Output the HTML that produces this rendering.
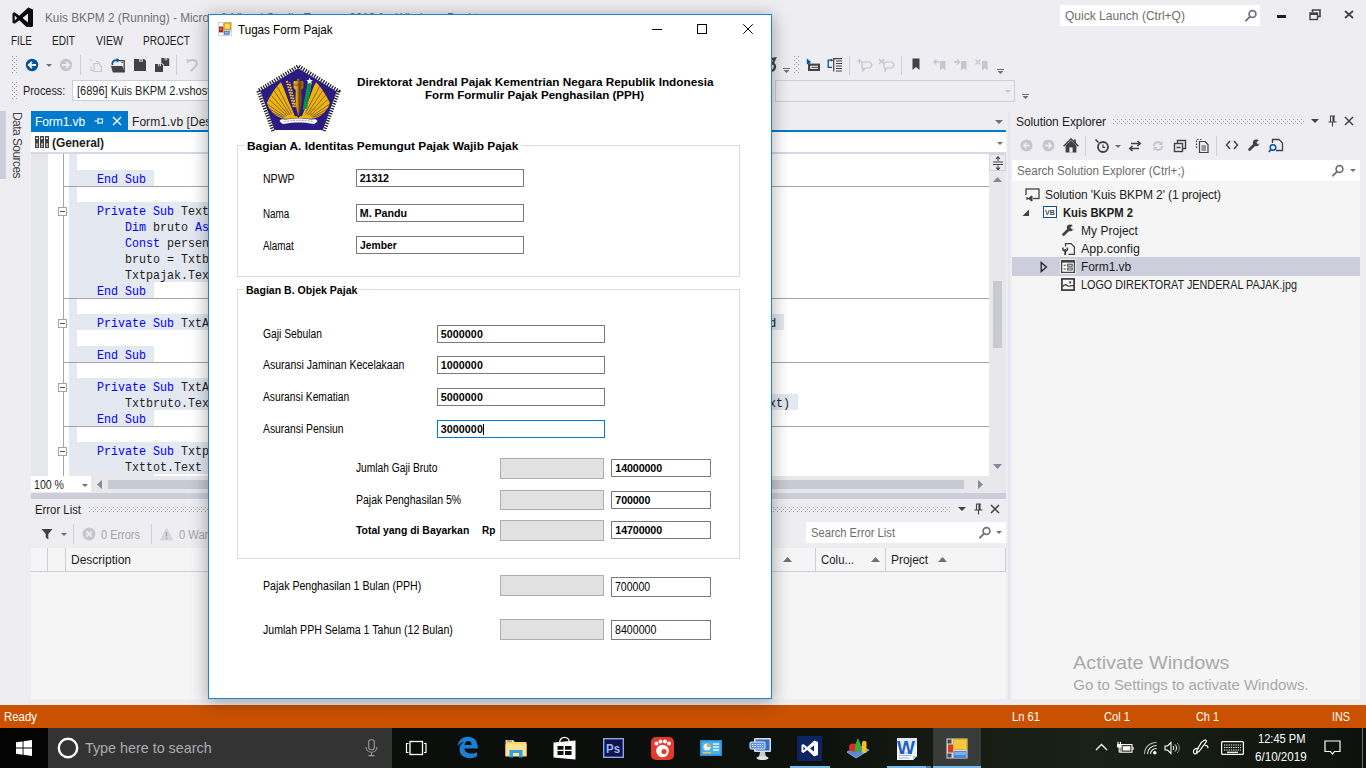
<!DOCTYPE html>
<html lang="id"><head><meta charset="utf-8"><title>Kuis BKPM 2 (Running) - Microsoft Visual Studio</title>
<style>
html,body{margin:0;padding:0;}
body{width:1366px;height:768px;overflow:hidden;position:relative;background:#eeeef2;font-family:"Liberation Sans",sans-serif;}
div,span,svg{position:absolute;box-sizing:border-box;}
.t{white-space:pre;}
</style></head>
<body>
<svg style="left:12px;top:7px;" width="21" height="20" viewBox="0 0 21 20"><path d="M16.2 0.5 L21.5 2.8 V19.2 L16.2 21.5 L7.2 13.2 L2.6 16.8 L0.5 15.7 V6.3 L2.6 5.2 L7.2 8.8 Z M16 6.6 L10.6 11 L16 15.4 Z M2.7 8.6 V13.4 L5.2 11 Z" fill="#0a0a0a" fill-rule="evenodd"/></svg>
<span class="t" style="left:44.5px;top:11.47px;font:12.5px/15px 'Liberation Sans', sans-serif;color:#717171;transform:scaleX(0.9443);transform-origin:0 50%;">Kuis BKPM 2 (Running) - Microsoft Visual Studio Express 2013 for Windows Desktop</span>
<div style="left:1060px;top:5px;width:200px;height:21px;background:#fff;"></div>
<span class="t" style="left:1065px;top:9.14px;font:12px/14px 'Liberation Sans', sans-serif;color:#6d6d6d;letter-spacing:0.013px;">Quick Launch (Ctrl+Q)</span>
<svg style="left:1243px;top:8px;" width="16" height="16" viewBox="0 0 16 16"><circle cx="9.5" cy="6" r="3.4" fill="none" stroke="#717171" stroke-width="1.7"/><path d="M7 8.6 L3 12.6" stroke="#717171" stroke-width="2" stroke-linecap="round"/></svg>
<div style="left:1277px;top:15px;width:9px;height:3px;background:#1e1e1e;"></div>
<svg style="left:1309px;top:9px;" width="12" height="12" viewBox="0 0 12 12"><path d="M3.5 3 V1 H11 V7.5 H9" fill="none" stroke="#424242" stroke-width="1.6"/><rect x="1" y="4" width="7.5" height="6.5" fill="none" stroke="#424242" stroke-width="1.4"/><rect x="1" y="4" width="7.5" height="2" fill="#424242"/></svg>
<svg style="left:1344px;top:10px;" width="10" height="9" viewBox="0 0 10 9"><path d="M1 1 L9 8 M9 1 L1 8" stroke="#424242" stroke-width="1.7"/></svg>
<span class="t" style="left:11px;top:34.14px;font:12px/14px 'Liberation Sans', sans-serif;color:#1e1e1e;transform:scaleX(0.8286);transform-origin:0 50%;">FILE</span>
<span class="t" style="left:52px;top:34.14px;font:12px/14px 'Liberation Sans', sans-serif;color:#1e1e1e;transform:scaleX(0.8411);transform-origin:0 50%;">EDIT</span>
<span class="t" style="left:96px;top:34.14px;font:12px/14px 'Liberation Sans', sans-serif;color:#1e1e1e;transform:scaleX(0.8803);transform-origin:0 50%;">VIEW</span>
<span class="t" style="left:143px;top:34.14px;font:12px/14px 'Liberation Sans', sans-serif;color:#1e1e1e;transform:scaleX(0.8391);transform-origin:0 50%;">PROJECT</span>
<svg style="left:12px;top:56px;" width="5" height="18" viewBox="0 0 5 18"><g fill="#9d9ea8"><rect x="0" y="0" width="1" height="1"/><rect x="4" y="0" width="1" height="1"/><rect x="2" y="2" width="1" height="1"/><rect x="0" y="4" width="1" height="1"/><rect x="4" y="4" width="1" height="1"/><rect x="2" y="6" width="1" height="1"/><rect x="0" y="8" width="1" height="1"/><rect x="4" y="8" width="1" height="1"/><rect x="2" y="10" width="1" height="1"/><rect x="0" y="12" width="1" height="1"/><rect x="4" y="12" width="1" height="1"/><rect x="2" y="14" width="1" height="1"/><rect x="0" y="16" width="1" height="1"/><rect x="4" y="16" width="1" height="1"/><rect x="2" y="18" width="1" height="1"/></g></svg>
<svg style="left:12px;top:82px;" width="5" height="18" viewBox="0 0 5 18"><g fill="#9d9ea8"><rect x="0" y="0" width="1" height="1"/><rect x="4" y="0" width="1" height="1"/><rect x="2" y="2" width="1" height="1"/><rect x="0" y="4" width="1" height="1"/><rect x="4" y="4" width="1" height="1"/><rect x="2" y="6" width="1" height="1"/><rect x="0" y="8" width="1" height="1"/><rect x="4" y="8" width="1" height="1"/><rect x="2" y="10" width="1" height="1"/><rect x="0" y="12" width="1" height="1"/><rect x="4" y="12" width="1" height="1"/><rect x="2" y="14" width="1" height="1"/><rect x="0" y="16" width="1" height="1"/><rect x="4" y="16" width="1" height="1"/><rect x="2" y="18" width="1" height="1"/></g></svg>
<svg style="left:24px;top:57px;" width="16" height="16" viewBox="0 0 16 16"><circle cx="8" cy="8" r="6.2" fill="#00539c"/><path d="M12 8 H5.2 M8 4.8 L4.8 8 L8 11.2" fill="none" stroke="#fff" stroke-width="1.8"/></svg>
<svg style="left:46px;top:64px;" width="6" height="3" viewBox="0 0 6 3"><path d="M0 0 H6 L3 3 Z" fill="#717171"/></svg>
<svg style="left:58px;top:57px;" width="16" height="16" viewBox="0 0 16 16"><circle cx="8" cy="8" r="6.2" fill="#c6c7cd"/><path d="M4 8 H10.8 M8 4.8 L11.2 8 L8 11.2" fill="none" stroke="#eeeef2" stroke-width="1.8"/></svg>
<div style="left:80px;top:55px;width:1px;height:20px;background:#cccedb;"></div>
<svg style="left:89px;top:58px;" width="14" height="14" viewBox="0 0 14 14"><path d="M5 5.5 H9.5 L12.5 8.5 V13.5 H5 Z" fill="none" stroke="#c6c7cd" stroke-width="1.2"/><path d="M7 3.5 H9 L11 5.5 M2 9 V12.5 H3.5" fill="none" stroke="#c6c7cd" stroke-width="1.1"/><path d="M0.5 0.5 l2.5 2.5 m0 -2.5 l-2.5 2.5" stroke="#d4d5da" stroke-width="0.9"/></svg>
<svg style="left:111px;top:58px;" width="15" height="15" viewBox="0 0 15 15"><path d="M8 2.6 H13.2 V14" fill="none" stroke="#424242" stroke-width="1.3"/><path d="M10.3 4.4 H12" stroke="#424242" stroke-width="1"/><path d="M0 8 H11.3 L13.9 14.6 H1.8 Z" fill="#424242"/><path d="M1.6 7 C0.3 3.2 4 1.6 6.4 2.3" fill="none" stroke="#00539c" stroke-width="1.7"/><path d="M5.6 0 L9 2.3 L5.6 4.7 Z" fill="#00539c"/></svg>
<svg style="left:134px;top:59px;" width="12" height="12" viewBox="0 0 12 12"><path d="M0 0 H10.2 L12 1.8 V12 H0 Z" fill="#424242"/><rect x="5.3" y="0" width="3.4" height="2.9" fill="#eeeef2"/><rect x="6.4" y="0.5" width="1.3" height="2" fill="#424242"/></svg>
<svg style="left:155px;top:58px;" width="15" height="14" viewBox="0 0 15 14"><path d="M6.3 0 H13.2 L14.2 1 V8 H6.3 Z" fill="#424242"/><rect x="9.6" y="0" width="2.6" height="2.2" fill="#eeeef2"/><rect x="10.4" y="0.3" width="1" height="1.6" fill="#424242"/><path d="M-0.6 5.4 H7.6 L8.8 6.6 V14.6 H-0.6 Z" fill="#eeeef2"/><path d="M0 6 H7 L8 7 V14 H0 Z" fill="#424242"/><rect x="3.2" y="6" width="2.6" height="2.2" fill="#eeeef2"/><rect x="4" y="6.3" width="1" height="1.6" fill="#424242"/></svg>
<div style="left:176px;top:55px;width:1px;height:20px;background:#cccedb;"></div>
<svg style="left:186px;top:58px;" width="13" height="14" viewBox="0 0 13 14"><path d="M2 3.5 C5 1.2 10.5 1.6 10.8 5.2 C11 8 7.5 10.5 4.8 13.2" fill="none" stroke="#c6c7cd" stroke-width="2.1"/><path d="M0.3 0.8 L5 2 L1.2 5.6 Z" fill="#c6c7cd"/></svg>
<span class="t" style="left:23.2px;top:84.14px;font:12px/14px 'Liberation Sans', sans-serif;color:#1e1e1e;transform:scaleX(0.9060);transform-origin:0 50%;">Process:</span>
<div style="left:72px;top:80px;width:400px;height:21px;background:#fff;border:1px solid #cccedb;"></div>
<span class="t" style="left:76.8px;top:84.14px;font:12px/14px 'Liberation Sans', sans-serif;color:#1e1e1e;transform:scaleX(0.9164);transform-origin:0 50%;">[6896] Kuis BKPM 2.vshost.exe</span>
<svg style="left:768px;top:57px;" width="10" height="16" viewBox="0 0 10 16"><path d="M3.5 2 L7 1.4 L4.6 6.6 C8 7 8 13 3 14" fill="none" stroke="#424242" stroke-width="2.2"/></svg>
<svg style="left:783px;top:68px;" width="7" height="6" viewBox="0 0 7 6"><path d="M0 0 H7 V1 H0 Z M0.5 2 H6.5 L3.5 5 Z" fill="#717171"/></svg>
<svg style="left:794px;top:56px;" width="5" height="18" viewBox="0 0 5 18"><g fill="#9d9ea8"><rect x="0" y="0" width="1" height="1"/><rect x="4" y="0" width="1" height="1"/><rect x="2" y="2" width="1" height="1"/><rect x="0" y="4" width="1" height="1"/><rect x="4" y="4" width="1" height="1"/><rect x="2" y="6" width="1" height="1"/><rect x="0" y="8" width="1" height="1"/><rect x="4" y="8" width="1" height="1"/><rect x="2" y="10" width="1" height="1"/><rect x="0" y="12" width="1" height="1"/><rect x="4" y="12" width="1" height="1"/><rect x="2" y="14" width="1" height="1"/><rect x="0" y="16" width="1" height="1"/><rect x="4" y="16" width="1" height="1"/><rect x="2" y="18" width="1" height="1"/></g></svg>
<svg style="left:806px;top:58px;" width="15" height="14" viewBox="0 0 15 14"><rect x="2" y="5.6" width="12" height="7.4" fill="#424242"/><rect x="4.2" y="7.7" width="7.8" height="3.2" fill="#eeeef2"/><rect x="5.4" y="8.8" width="6.6" height="1" fill="#424242"/><path d="M0.8 0.6 L5.4 4.2 L3.4 4.8 L4.6 7.4 L3.4 7.9 L2.3 5.4 L0.8 6.6 Z" fill="#00539c"/></svg>
<svg style="left:827px;top:58px;" width="16" height="14" viewBox="0 0 16 14"><path d="M5.4 2.2 H1.2 V9.4 H5" fill="none" stroke="#00539c" stroke-width="1.3"/><path d="M3.8 0.6 L6.2 2.2 L3.8 3.8 Z" fill="#00539c"/><path d="M6.7 0 V13.6" stroke="#424242" stroke-width="1.2"/><path d="M6.7 0.6 H15 M9 3 H15 M9 5.5 H15 M9 8 H15 M9 10.5 H15 M9 13 H15" stroke="#424242" stroke-width="1.1"/></svg>
<div style="left:849px;top:56px;width:1px;height:19px;background:#cccedb;"></div>
<svg style="left:856px;top:58px;" width="18" height="14" viewBox="0 0 18 14"><path d="M6 4 H14 L16 7 L14 10 H9 L7 13 V10 H6 Z" fill="none" stroke="#c2c3c9" stroke-width="1.2"/><path d="M1 3 H6 M3.5 0.5 V5.5" stroke="#c2c3c9" stroke-width="1.2"/></svg>
<svg style="left:878px;top:58px;" width="18" height="14" viewBox="0 0 18 14"><path d="M6 4 H14 L16 7 L14 10 H9 L7 13 V10 H6 Z" fill="none" stroke="#c2c3c9" stroke-width="1.2"/><path d="M1 1 L6 6 M6 1 L1 6" stroke="#c2c3c9" stroke-width="1.2"/></svg>
<div style="left:901px;top:56px;width:1px;height:19px;background:#cccedb;"></div>
<svg style="left:911px;top:58px;" width="10" height="13" viewBox="0 0 10 13"><path d="M1.5 0.5 H8.5 V12 L5 9 L1.5 12 Z" fill="#424242"/></svg>
<svg style="left:932px;top:58px;" width="16" height="13" viewBox="0 0 16 13"><path d="M8 3 H13.5 V12.5 L10.75 10 L8 12.5 Z" fill="#c6c7cd"/><path d="M2 4 H7.5 M4.5 1.5 L2 4 L4.5 6.5" fill="none" stroke="#c6c7cd" stroke-width="1.4"/></svg>
<svg style="left:953px;top:58px;" width="16" height="13" viewBox="0 0 16 13"><path d="M8 3 H13.5 V12.5 L10.75 10 L8 12.5 Z" fill="#c6c7cd"/><path d="M1 4 H6.5 M4 1.5 L6.5 4 L4 6.5" fill="none" stroke="#c6c7cd" stroke-width="1.4"/></svg>
<svg style="left:974px;top:58px;" width="16" height="13" viewBox="0 0 16 13"><path d="M8 3 H13.5 V12.5 L10.75 10 L8 12.5 Z" fill="#c6c7cd"/><path d="M1.5 1.5 L6.5 6.5 M6.5 1.5 L1.5 6.5" fill="none" stroke="#c6c7cd" stroke-width="1.4"/></svg>
<svg style="left:997px;top:69px;" width="7" height="5" viewBox="0 0 7 5"><path d="M0 0 H7 V1 H0 Z M0.5 2 H6.5 L3.5 5 Z" fill="#717171"/></svg>
<div style="left:775px;top:80px;width:240px;height:22px;background:#eeeef2;border:1px solid #cccedb;"></div>
<svg style="left:1005px;top:90px;" width="6" height="3" viewBox="0 0 6 3"><path d="M0 0 H6 L3 3 Z" fill="#c2c3c9"/></svg>
<svg style="left:1022px;top:94px;" width="7" height="5" viewBox="0 0 7 5"><path d="M0 0 H7 V1 H0 Z M0.5 2 H6.5 L3.5 5 Z" fill="#717171"/></svg>
<div style="left:0px;top:111px;width:6px;height:68px;background:#cccedb;"></div>
<div style="left:1008px;top:112px;width:2px;height:588px;background:#e5e6ef;"></div>
<span class="t" style="left:0px;top:-10.86px;font:12px/14px 'Liberation Sans', sans-serif;color:#444;letter-spacing:-0.559px;left:0;top:0;transform-origin:0 0;transform:translate(24px,112px) rotate(90deg);">Data Sources</span>
<div style="left:31px;top:111px;width:97px;height:21px;background:#007acc;"></div>
<span class="t" style="left:35px;top:115.14px;font:12px/14px 'Liberation Sans', sans-serif;color:#fff;letter-spacing:-0.086px;">Form1.vb</span>
<svg style="left:94px;top:116px;" width="10" height="10" viewBox="0 0 10 10"><path d="M0.5 5 H4 M4 2 V8 M4 3 H9 M4 7 H9 M8.5 3 V7" fill="none" stroke="#fff" stroke-width="1.1"/></svg>
<svg style="left:112px;top:116px;" width="10" height="10" viewBox="0 0 10 10"><path d="M1 1 L9 9 M9 1 L1 9" stroke="#fff" stroke-width="1.3"/></svg>
<span class="t" style="left:132px;top:115.14px;font:12px/14px 'Liberation Sans', sans-serif;color:#1e1e1e;letter-spacing:0.056px;">Form1.vb [Design]</span>
<div style="left:31px;top:130px;width:975px;height:2px;background:#007acc;"></div>
<svg style="left:995px;top:120px;" width="8" height="4" viewBox="0 0 8 4"><path d="M0 0 H8 L4 4 Z" fill="#717171"/></svg>
<div style="left:31px;top:132px;width:975px;height:22px;background:#fff;border-bottom:2px solid #d6d8e6;"></div>
<svg style="left:35px;top:136px;" width="14" height="12" viewBox="0 0 14 12"><g fill="#424242"><rect x="0" y="0" width="4" height="12"/><rect x="5" y="0" width="4" height="12"/><rect x="10" y="0" width="4" height="12"/></g><g fill="#fff"><rect x="1" y="1.6" width="2" height="1.4"/><rect x="6" y="1.6" width="2" height="1.4"/><rect x="11" y="1.6" width="2" height="1.4"/><rect x="1" y="7.6" width="2" height="1"/><rect x="6" y="7.6" width="2" height="1"/><rect x="11" y="7.6" width="2" height="1"/><rect x="1" y="9.6" width="2" height="1"/><rect x="6" y="9.6" width="2" height="1"/><rect x="11" y="9.6" width="2" height="1"/></g></svg>
<span class="t" style="left:52px;top:136.14px;font:bold 12px/14px 'Liberation Sans', sans-serif;color:#1e1e1e;letter-spacing:-0.076px;">(General)</span>
<svg style="left:997px;top:142px;" width="6" height="3" viewBox="0 0 6 3"><path d="M0 0 H6 L3 3 Z" fill="#717171"/></svg>
<div style="left:31px;top:154px;width:959px;height:322px;background:#fff;"></div>
<div style="left:31px;top:154px;width:17px;height:322px;background:#e6e7e8;"></div>
<div style="left:63px;top:154px;width:1px;height:322px;background:#a5a5a5;"></div>
<div style="left:69px;top:154px;width:8px;height:16px;background:#e4e8f1;"></div>
<div style="left:69px;top:170px;width:85px;height:16px;background:#e4e8f1;"></div>
<span class="t" style="left:97px;top:173.00px;font:12.2px/15px 'Liberation Mono', monospace;color:#0000ff;transform:scaleX(0.9570);transform-origin:0 50%;">End Sub</span>
<div style="left:69px;top:186px;width:8px;height:16px;background:#e4e8f1;"></div>
<div style="left:69px;top:202px;width:631px;height:16px;background:#e4e8f1;"></div>
<span class="t" style="left:97px;top:205.00px;font:12.2px/15px 'Liberation Mono', monospace;color:#0000ff;transform:scaleX(0.9571);transform-origin:0 50%;">Private Sub</span>
<span class="t" style="left:181px;top:205.00px;font:12.2px/15px 'Liberation Mono', monospace;color:#1e1e1e;transform:scaleX(0.9570);transform-origin:0 50%;">TextBox1_TextChanged(sender </span>
<div style="left:69px;top:218px;width:331px;height:16px;background:#e4e8f1;"></div>
<span class="t" style="left:125px;top:221.00px;font:12.2px/15px 'Liberation Mono', monospace;color:#0000ff;transform:scaleX(0.9566);transform-origin:0 50%;">Dim</span>
<span class="t" style="left:153px;top:221.00px;font:12.2px/15px 'Liberation Mono', monospace;color:#1e1e1e;transform:scaleX(0.9569);transform-origin:0 50%;">bruto </span>
<span class="t" style="left:195px;top:221.00px;font:12.2px/15px 'Liberation Mono', monospace;color:#0000ff;transform:scaleX(0.9562);transform-origin:0 50%;">As</span>
<div style="left:69px;top:234px;width:331px;height:16px;background:#e4e8f1;"></div>
<span class="t" style="left:125px;top:237.00px;font:12.2px/15px 'Liberation Mono', monospace;color:#0000ff;transform:scaleX(0.9569);transform-origin:0 50%;">Const</span>
<span class="t" style="left:167px;top:237.00px;font:12.2px/15px 'Liberation Mono', monospace;color:#1e1e1e;transform:scaleX(0.9569);transform-origin:0 50%;">persen</span>
<div style="left:69px;top:250px;width:331px;height:16px;background:#e4e8f1;"></div>
<span class="t" style="left:125px;top:253.00px;font:12.2px/15px 'Liberation Mono', monospace;color:#1e1e1e;transform:scaleX(0.9571);transform-origin:0 50%;">bruto = Txtb</span>
<div style="left:69px;top:266px;width:331px;height:16px;background:#e4e8f1;"></div>
<span class="t" style="left:125px;top:269.00px;font:12.2px/15px 'Liberation Mono', monospace;color:#1e1e1e;transform:scaleX(0.9571);transform-origin:0 50%;">Txtpajak.Tex</span>
<div style="left:69px;top:282px;width:85px;height:16px;background:#e4e8f1;"></div>
<span class="t" style="left:97px;top:285.00px;font:12.2px/15px 'Liberation Mono', monospace;color:#0000ff;transform:scaleX(0.9570);transform-origin:0 50%;">End Sub</span>
<div style="left:69px;top:298px;width:8px;height:16px;background:#e4e8f1;"></div>
<div style="left:69px;top:314px;width:715px;height:16px;background:#e4e8f1;"></div>
<span class="t" style="left:97px;top:317.00px;font:12.2px/15px 'Liberation Mono', monospace;color:#0000ff;transform:scaleX(0.9571);transform-origin:0 50%;">Private Sub</span>
<span class="t" style="left:181px;top:317.00px;font:12.2px/15px 'Liberation Mono', monospace;color:#1e1e1e;transform:scaleX(0.9568);transform-origin:0 50%;">TxtA</span>
<div style="left:69px;top:330px;width:8px;height:16px;background:#e4e8f1;"></div>
<div style="left:69px;top:346px;width:85px;height:16px;background:#e4e8f1;"></div>
<span class="t" style="left:97px;top:349.00px;font:12.2px/15px 'Liberation Mono', monospace;color:#0000ff;transform:scaleX(0.9570);transform-origin:0 50%;">End Sub</span>
<div style="left:69px;top:362px;width:8px;height:16px;background:#e4e8f1;"></div>
<div style="left:69px;top:378px;width:631px;height:16px;background:#e4e8f1;"></div>
<span class="t" style="left:97px;top:381.00px;font:12.2px/15px 'Liberation Mono', monospace;color:#0000ff;transform:scaleX(0.9571);transform-origin:0 50%;">Private Sub</span>
<span class="t" style="left:181px;top:381.00px;font:12.2px/15px 'Liberation Mono', monospace;color:#1e1e1e;transform:scaleX(0.9568);transform-origin:0 50%;">TxtA</span>
<div style="left:69px;top:394px;width:729px;height:16px;background:#e4e8f1;"></div>
<span class="t" style="left:125px;top:397.00px;font:12.2px/15px 'Liberation Mono', monospace;color:#1e1e1e;transform:scaleX(0.9571);transform-origin:0 50%;">Txtbruto.Tex</span>
<div style="left:69px;top:410px;width:85px;height:16px;background:#e4e8f1;"></div>
<span class="t" style="left:97px;top:413.00px;font:12.2px/15px 'Liberation Mono', monospace;color:#0000ff;transform:scaleX(0.9570);transform-origin:0 50%;">End Sub</span>
<div style="left:69px;top:426px;width:8px;height:16px;background:#e4e8f1;"></div>
<div style="left:69px;top:442px;width:631px;height:16px;background:#e4e8f1;"></div>
<span class="t" style="left:97px;top:445.00px;font:12.2px/15px 'Liberation Mono', monospace;color:#0000ff;transform:scaleX(0.9571);transform-origin:0 50%;">Private Sub</span>
<span class="t" style="left:181px;top:445.00px;font:12.2px/15px 'Liberation Mono', monospace;color:#1e1e1e;transform:scaleX(0.9568);transform-origin:0 50%;">Txtp</span>
<div style="left:69px;top:458px;width:431px;height:16px;background:#e4e8f1;"></div>
<span class="t" style="left:125px;top:461.00px;font:12.2px/15px 'Liberation Mono', monospace;color:#1e1e1e;transform:scaleX(0.9571);transform-origin:0 50%;">Txttot.Text</span>
<div style="left:69px;top:474px;width:8px;height:2px;background:#e4e8f1;"></div>
<div style="left:69px;top:474px;width:85px;height:2px;background:#e4e8f1;"></div>
<div style="left:63px;top:186px;width:926px;height:1px;background:#a5a5a5;"></div>
<div style="left:63px;top:298px;width:926px;height:1px;background:#a5a5a5;"></div>
<div style="left:63px;top:362px;width:926px;height:1px;background:#a5a5a5;"></div>
<div style="left:63px;top:426px;width:926px;height:1px;background:#a5a5a5;"></div>
<span class="t" style="left:769px;top:317.00px;font:12.2px/15px 'Liberation Mono', monospace;color:#1e1e1e;">d</span>
<span class="t" style="left:769px;top:397.00px;font:12.2px/15px 'Liberation Mono', monospace;color:#1e1e1e;transform:scaleX(0.9566);transform-origin:0 50%;">xt)</span>
<div style="left:58px;top:207px;width:9px;height:9px;background:#fff;border:1px solid #a5a5a5;"><div style="left:1px;top:3px;width:5px;height:1px;background:#555"></div></div>
<div style="left:58px;top:319px;width:9px;height:9px;background:#fff;border:1px solid #a5a5a5;"><div style="left:1px;top:3px;width:5px;height:1px;background:#555"></div></div>
<div style="left:58px;top:383px;width:9px;height:9px;background:#fff;border:1px solid #a5a5a5;"><div style="left:1px;top:3px;width:5px;height:1px;background:#555"></div></div>
<div style="left:58px;top:447px;width:9px;height:9px;background:#fff;border:1px solid #a5a5a5;"><div style="left:1px;top:3px;width:5px;height:1px;background:#555"></div></div>
<div style="left:989px;top:154px;width:17px;height:322px;background:#e8e8ec;"></div>
<div style="left:989px;top:154px;width:17px;height:17px;background:#ececf0;border:1px solid #d2d3de;"></div>
<svg style="left:991px;top:156px;" width="13" height="14" viewBox="0 0 13 14"><path d="M2 6 H12 M2 8.5 H12 M7 1 V5 M7 9.5 V13.5 M5 3 L7 0.8 L9 3 M5 11.5 L7 13.7 L9 11.5" fill="none" stroke="#424242" stroke-width="1.1"/></svg>
<svg style="left:993px;top:177px;" width="9" height="5" viewBox="0 0 9 5"><path d="M0 5 H9 L4.5 0 Z" fill="#868999"/></svg>
<svg style="left:993px;top:464px;" width="9" height="5" viewBox="0 0 9 5"><path d="M0 0 H9 L4.5 5 Z" fill="#868999"/></svg>
<div style="left:993px;top:281px;width:9px;height:67px;background:#c8c9d1;"></div>
<div style="left:31px;top:476px;width:975px;height:17px;background:#e8e8ec;"></div>
<div style="left:31px;top:476px;width:60px;height:16px;background:#fff;"></div>
<span class="t" style="left:34px;top:478.14px;font:12px/14px 'Liberation Sans', sans-serif;color:#1e1e1e;transform:scaleX(0.8815);transform-origin:0 50%;">100 %</span>
<svg style="left:82px;top:484px;" width="6" height="3" viewBox="0 0 6 3"><path d="M0 0 H6 L3 3 Z" fill="#717171"/></svg>
<svg style="left:97px;top:480px;" width="5" height="9" viewBox="0 0 5 9"><path d="M5 0 V9 L0 4.5 Z" fill="#868999"/></svg>
<svg style="left:978px;top:480px;" width="5" height="9" viewBox="0 0 5 9"><path d="M0 0 V9 L5 4.5 Z" fill="#868999"/></svg>
<div style="left:108px;top:480px;width:856px;height:9px;background:#c8c9d1;"></div>
<div style="left:31px;top:493px;width:975px;height:6px;background:#cccedb;"></div>
<span class="t" style="left:35px;top:503.14px;font:12px/14px 'Liberation Sans', sans-serif;color:#1e1e1e;transform:scaleX(0.9448);transform-origin:0 50%;">Error List</span>
<svg style="left:89px;top:507px;" width="862" height="5" viewBox="0 0 862 5"><g fill="#999ba8"><rect x="0" y="0" width="1" height="1"/><rect x="2" y="2" width="1" height="1"/><rect x="0" y="4" width="1" height="1"/><rect x="4" y="0" width="1" height="1"/><rect x="6" y="2" width="1" height="1"/><rect x="4" y="4" width="1" height="1"/><rect x="8" y="0" width="1" height="1"/><rect x="10" y="2" width="1" height="1"/><rect x="8" y="4" width="1" height="1"/><rect x="12" y="0" width="1" height="1"/><rect x="14" y="2" width="1" height="1"/><rect x="12" y="4" width="1" height="1"/><rect x="16" y="0" width="1" height="1"/><rect x="18" y="2" width="1" height="1"/><rect x="16" y="4" width="1" height="1"/><rect x="20" y="0" width="1" height="1"/><rect x="22" y="2" width="1" height="1"/><rect x="20" y="4" width="1" height="1"/><rect x="24" y="0" width="1" height="1"/><rect x="26" y="2" width="1" height="1"/><rect x="24" y="4" width="1" height="1"/><rect x="28" y="0" width="1" height="1"/><rect x="30" y="2" width="1" height="1"/><rect x="28" y="4" width="1" height="1"/><rect x="32" y="0" width="1" height="1"/><rect x="34" y="2" width="1" height="1"/><rect x="32" y="4" width="1" height="1"/><rect x="36" y="0" width="1" height="1"/><rect x="38" y="2" width="1" height="1"/><rect x="36" y="4" width="1" height="1"/><rect x="40" y="0" width="1" height="1"/><rect x="42" y="2" width="1" height="1"/><rect x="40" y="4" width="1" height="1"/><rect x="44" y="0" width="1" height="1"/><rect x="46" y="2" width="1" height="1"/><rect x="44" y="4" width="1" height="1"/><rect x="48" y="0" width="1" height="1"/><rect x="50" y="2" width="1" height="1"/><rect x="48" y="4" width="1" height="1"/><rect x="52" y="0" width="1" height="1"/><rect x="54" y="2" width="1" height="1"/><rect x="52" y="4" width="1" height="1"/><rect x="56" y="0" width="1" height="1"/><rect x="58" y="2" width="1" height="1"/><rect x="56" y="4" width="1" height="1"/><rect x="60" y="0" width="1" height="1"/><rect x="62" y="2" width="1" height="1"/><rect x="60" y="4" width="1" height="1"/><rect x="64" y="0" width="1" height="1"/><rect x="66" y="2" width="1" height="1"/><rect x="64" y="4" width="1" height="1"/><rect x="68" y="0" width="1" height="1"/><rect x="70" y="2" width="1" height="1"/><rect x="68" y="4" width="1" height="1"/><rect x="72" y="0" width="1" height="1"/><rect x="74" y="2" width="1" height="1"/><rect x="72" y="4" width="1" height="1"/><rect x="76" y="0" width="1" height="1"/><rect x="78" y="2" width="1" height="1"/><rect x="76" y="4" width="1" height="1"/><rect x="80" y="0" width="1" height="1"/><rect x="82" y="2" width="1" height="1"/><rect x="80" y="4" width="1" height="1"/><rect x="84" y="0" width="1" height="1"/><rect x="86" y="2" width="1" height="1"/><rect x="84" y="4" width="1" height="1"/><rect x="88" y="0" width="1" height="1"/><rect x="90" y="2" width="1" height="1"/><rect x="88" y="4" width="1" height="1"/><rect x="92" y="0" width="1" height="1"/><rect x="94" y="2" width="1" height="1"/><rect x="92" y="4" width="1" height="1"/><rect x="96" y="0" width="1" height="1"/><rect x="98" y="2" width="1" height="1"/><rect x="96" y="4" width="1" height="1"/><rect x="100" y="0" width="1" height="1"/><rect x="102" y="2" width="1" height="1"/><rect x="100" y="4" width="1" height="1"/><rect x="104" y="0" width="1" height="1"/><rect x="106" y="2" width="1" height="1"/><rect x="104" y="4" width="1" height="1"/><rect x="108" y="0" width="1" height="1"/><rect x="110" y="2" width="1" height="1"/><rect x="108" y="4" width="1" height="1"/><rect x="112" y="0" width="1" height="1"/><rect x="114" y="2" width="1" height="1"/><rect x="112" y="4" width="1" height="1"/><rect x="116" y="0" width="1" height="1"/><rect x="118" y="2" width="1" height="1"/><rect x="116" y="4" width="1" height="1"/><rect x="120" y="0" width="1" height="1"/><rect x="122" y="2" width="1" height="1"/><rect x="120" y="4" width="1" height="1"/><rect x="124" y="0" width="1" height="1"/><rect x="126" y="2" width="1" height="1"/><rect x="124" y="4" width="1" height="1"/><rect x="128" y="0" width="1" height="1"/><rect x="130" y="2" width="1" height="1"/><rect x="128" y="4" width="1" height="1"/><rect x="132" y="0" width="1" height="1"/><rect x="134" y="2" width="1" height="1"/><rect x="132" y="4" width="1" height="1"/><rect x="136" y="0" width="1" height="1"/><rect x="138" y="2" width="1" height="1"/><rect x="136" y="4" width="1" height="1"/><rect x="140" y="0" width="1" height="1"/><rect x="142" y="2" width="1" height="1"/><rect x="140" y="4" width="1" height="1"/><rect x="144" y="0" width="1" height="1"/><rect x="146" y="2" width="1" height="1"/><rect x="144" y="4" width="1" height="1"/><rect x="148" y="0" width="1" height="1"/><rect x="150" y="2" width="1" height="1"/><rect x="148" y="4" width="1" height="1"/><rect x="152" y="0" width="1" height="1"/><rect x="154" y="2" width="1" height="1"/><rect x="152" y="4" width="1" height="1"/><rect x="156" y="0" width="1" height="1"/><rect x="158" y="2" width="1" height="1"/><rect x="156" y="4" width="1" height="1"/><rect x="160" y="0" width="1" height="1"/><rect x="162" y="2" width="1" height="1"/><rect x="160" y="4" width="1" height="1"/><rect x="164" y="0" width="1" height="1"/><rect x="166" y="2" width="1" height="1"/><rect x="164" y="4" width="1" height="1"/><rect x="168" y="0" width="1" height="1"/><rect x="170" y="2" width="1" height="1"/><rect x="168" y="4" width="1" height="1"/><rect x="172" y="0" width="1" height="1"/><rect x="174" y="2" width="1" height="1"/><rect x="172" y="4" width="1" height="1"/><rect x="176" y="0" width="1" height="1"/><rect x="178" y="2" width="1" height="1"/><rect x="176" y="4" width="1" height="1"/><rect x="180" y="0" width="1" height="1"/><rect x="182" y="2" width="1" height="1"/><rect x="180" y="4" width="1" height="1"/><rect x="184" y="0" width="1" height="1"/><rect x="186" y="2" width="1" height="1"/><rect x="184" y="4" width="1" height="1"/><rect x="188" y="0" width="1" height="1"/><rect x="190" y="2" width="1" height="1"/><rect x="188" y="4" width="1" height="1"/><rect x="192" y="0" width="1" height="1"/><rect x="194" y="2" width="1" height="1"/><rect x="192" y="4" width="1" height="1"/><rect x="196" y="0" width="1" height="1"/><rect x="198" y="2" width="1" height="1"/><rect x="196" y="4" width="1" height="1"/><rect x="200" y="0" width="1" height="1"/><rect x="202" y="2" width="1" height="1"/><rect x="200" y="4" width="1" height="1"/><rect x="204" y="0" width="1" height="1"/><rect x="206" y="2" width="1" height="1"/><rect x="204" y="4" width="1" height="1"/><rect x="208" y="0" width="1" height="1"/><rect x="210" y="2" width="1" height="1"/><rect x="208" y="4" width="1" height="1"/><rect x="212" y="0" width="1" height="1"/><rect x="214" y="2" width="1" height="1"/><rect x="212" y="4" width="1" height="1"/><rect x="216" y="0" width="1" height="1"/><rect x="218" y="2" width="1" height="1"/><rect x="216" y="4" width="1" height="1"/><rect x="220" y="0" width="1" height="1"/><rect x="222" y="2" width="1" height="1"/><rect x="220" y="4" width="1" height="1"/><rect x="224" y="0" width="1" height="1"/><rect x="226" y="2" width="1" height="1"/><rect x="224" y="4" width="1" height="1"/><rect x="228" y="0" width="1" height="1"/><rect x="230" y="2" width="1" height="1"/><rect x="228" y="4" width="1" height="1"/><rect x="232" y="0" width="1" height="1"/><rect x="234" y="2" width="1" height="1"/><rect x="232" y="4" width="1" height="1"/><rect x="236" y="0" width="1" height="1"/><rect x="238" y="2" width="1" height="1"/><rect x="236" y="4" width="1" height="1"/><rect x="240" y="0" width="1" height="1"/><rect x="242" y="2" width="1" height="1"/><rect x="240" y="4" width="1" height="1"/><rect x="244" y="0" width="1" height="1"/><rect x="246" y="2" width="1" height="1"/><rect x="244" y="4" width="1" height="1"/><rect x="248" y="0" width="1" height="1"/><rect x="250" y="2" width="1" height="1"/><rect x="248" y="4" width="1" height="1"/><rect x="252" y="0" width="1" height="1"/><rect x="254" y="2" width="1" height="1"/><rect x="252" y="4" width="1" height="1"/><rect x="256" y="0" width="1" height="1"/><rect x="258" y="2" width="1" height="1"/><rect x="256" y="4" width="1" height="1"/><rect x="260" y="0" width="1" height="1"/><rect x="262" y="2" width="1" height="1"/><rect x="260" y="4" width="1" height="1"/><rect x="264" y="0" width="1" height="1"/><rect x="266" y="2" width="1" height="1"/><rect x="264" y="4" width="1" height="1"/><rect x="268" y="0" width="1" height="1"/><rect x="270" y="2" width="1" height="1"/><rect x="268" y="4" width="1" height="1"/><rect x="272" y="0" width="1" height="1"/><rect x="274" y="2" width="1" height="1"/><rect x="272" y="4" width="1" height="1"/><rect x="276" y="0" width="1" height="1"/><rect x="278" y="2" width="1" height="1"/><rect x="276" y="4" width="1" height="1"/><rect x="280" y="0" width="1" height="1"/><rect x="282" y="2" width="1" height="1"/><rect x="280" y="4" width="1" height="1"/><rect x="284" y="0" width="1" height="1"/><rect x="286" y="2" width="1" height="1"/><rect x="284" y="4" width="1" height="1"/><rect x="288" y="0" width="1" height="1"/><rect x="290" y="2" width="1" height="1"/><rect x="288" y="4" width="1" height="1"/><rect x="292" y="0" width="1" height="1"/><rect x="294" y="2" width="1" height="1"/><rect x="292" y="4" width="1" height="1"/><rect x="296" y="0" width="1" height="1"/><rect x="298" y="2" width="1" height="1"/><rect x="296" y="4" width="1" height="1"/><rect x="300" y="0" width="1" height="1"/><rect x="302" y="2" width="1" height="1"/><rect x="300" y="4" width="1" height="1"/><rect x="304" y="0" width="1" height="1"/><rect x="306" y="2" width="1" height="1"/><rect x="304" y="4" width="1" height="1"/><rect x="308" y="0" width="1" height="1"/><rect x="310" y="2" width="1" height="1"/><rect x="308" y="4" width="1" height="1"/><rect x="312" y="0" width="1" height="1"/><rect x="314" y="2" width="1" height="1"/><rect x="312" y="4" width="1" height="1"/><rect x="316" y="0" width="1" height="1"/><rect x="318" y="2" width="1" height="1"/><rect x="316" y="4" width="1" height="1"/><rect x="320" y="0" width="1" height="1"/><rect x="322" y="2" width="1" height="1"/><rect x="320" y="4" width="1" height="1"/><rect x="324" y="0" width="1" height="1"/><rect x="326" y="2" width="1" height="1"/><rect x="324" y="4" width="1" height="1"/><rect x="328" y="0" width="1" height="1"/><rect x="330" y="2" width="1" height="1"/><rect x="328" y="4" width="1" height="1"/><rect x="332" y="0" width="1" height="1"/><rect x="334" y="2" width="1" height="1"/><rect x="332" y="4" width="1" height="1"/><rect x="336" y="0" width="1" height="1"/><rect x="338" y="2" width="1" height="1"/><rect x="336" y="4" width="1" height="1"/><rect x="340" y="0" width="1" height="1"/><rect x="342" y="2" width="1" height="1"/><rect x="340" y="4" width="1" height="1"/><rect x="344" y="0" width="1" height="1"/><rect x="346" y="2" width="1" height="1"/><rect x="344" y="4" width="1" height="1"/><rect x="348" y="0" width="1" height="1"/><rect x="350" y="2" width="1" height="1"/><rect x="348" y="4" width="1" height="1"/><rect x="352" y="0" width="1" height="1"/><rect x="354" y="2" width="1" height="1"/><rect x="352" y="4" width="1" height="1"/><rect x="356" y="0" width="1" height="1"/><rect x="358" y="2" width="1" height="1"/><rect x="356" y="4" width="1" height="1"/><rect x="360" y="0" width="1" height="1"/><rect x="362" y="2" width="1" height="1"/><rect x="360" y="4" width="1" height="1"/><rect x="364" y="0" width="1" height="1"/><rect x="366" y="2" width="1" height="1"/><rect x="364" y="4" width="1" height="1"/><rect x="368" y="0" width="1" height="1"/><rect x="370" y="2" width="1" height="1"/><rect x="368" y="4" width="1" height="1"/><rect x="372" y="0" width="1" height="1"/><rect x="374" y="2" width="1" height="1"/><rect x="372" y="4" width="1" height="1"/><rect x="376" y="0" width="1" height="1"/><rect x="378" y="2" width="1" height="1"/><rect x="376" y="4" width="1" height="1"/><rect x="380" y="0" width="1" height="1"/><rect x="382" y="2" width="1" height="1"/><rect x="380" y="4" width="1" height="1"/><rect x="384" y="0" width="1" height="1"/><rect x="386" y="2" width="1" height="1"/><rect x="384" y="4" width="1" height="1"/><rect x="388" y="0" width="1" height="1"/><rect x="390" y="2" width="1" height="1"/><rect x="388" y="4" width="1" height="1"/><rect x="392" y="0" width="1" height="1"/><rect x="394" y="2" width="1" height="1"/><rect x="392" y="4" width="1" height="1"/><rect x="396" y="0" width="1" height="1"/><rect x="398" y="2" width="1" height="1"/><rect x="396" y="4" width="1" height="1"/><rect x="400" y="0" width="1" height="1"/><rect x="402" y="2" width="1" height="1"/><rect x="400" y="4" width="1" height="1"/><rect x="404" y="0" width="1" height="1"/><rect x="406" y="2" width="1" height="1"/><rect x="404" y="4" width="1" height="1"/><rect x="408" y="0" width="1" height="1"/><rect x="410" y="2" width="1" height="1"/><rect x="408" y="4" width="1" height="1"/><rect x="412" y="0" width="1" height="1"/><rect x="414" y="2" width="1" height="1"/><rect x="412" y="4" width="1" height="1"/><rect x="416" y="0" width="1" height="1"/><rect x="418" y="2" width="1" height="1"/><rect x="416" y="4" width="1" height="1"/><rect x="420" y="0" width="1" height="1"/><rect x="422" y="2" width="1" height="1"/><rect x="420" y="4" width="1" height="1"/><rect x="424" y="0" width="1" height="1"/><rect x="426" y="2" width="1" height="1"/><rect x="424" y="4" width="1" height="1"/><rect x="428" y="0" width="1" height="1"/><rect x="430" y="2" width="1" height="1"/><rect x="428" y="4" width="1" height="1"/><rect x="432" y="0" width="1" height="1"/><rect x="434" y="2" width="1" height="1"/><rect x="432" y="4" width="1" height="1"/><rect x="436" y="0" width="1" height="1"/><rect x="438" y="2" width="1" height="1"/><rect x="436" y="4" width="1" height="1"/><rect x="440" y="0" width="1" height="1"/><rect x="442" y="2" width="1" height="1"/><rect x="440" y="4" width="1" height="1"/><rect x="444" y="0" width="1" height="1"/><rect x="446" y="2" width="1" height="1"/><rect x="444" y="4" width="1" height="1"/><rect x="448" y="0" width="1" height="1"/><rect x="450" y="2" width="1" height="1"/><rect x="448" y="4" width="1" height="1"/><rect x="452" y="0" width="1" height="1"/><rect x="454" y="2" width="1" height="1"/><rect x="452" y="4" width="1" height="1"/><rect x="456" y="0" width="1" height="1"/><rect x="458" y="2" width="1" height="1"/><rect x="456" y="4" width="1" height="1"/><rect x="460" y="0" width="1" height="1"/><rect x="462" y="2" width="1" height="1"/><rect x="460" y="4" width="1" height="1"/><rect x="464" y="0" width="1" height="1"/><rect x="466" y="2" width="1" height="1"/><rect x="464" y="4" width="1" height="1"/><rect x="468" y="0" width="1" height="1"/><rect x="470" y="2" width="1" height="1"/><rect x="468" y="4" width="1" height="1"/><rect x="472" y="0" width="1" height="1"/><rect x="474" y="2" width="1" height="1"/><rect x="472" y="4" width="1" height="1"/><rect x="476" y="0" width="1" height="1"/><rect x="478" y="2" width="1" height="1"/><rect x="476" y="4" width="1" height="1"/><rect x="480" y="0" width="1" height="1"/><rect x="482" y="2" width="1" height="1"/><rect x="480" y="4" width="1" height="1"/><rect x="484" y="0" width="1" height="1"/><rect x="486" y="2" width="1" height="1"/><rect x="484" y="4" width="1" height="1"/><rect x="488" y="0" width="1" height="1"/><rect x="490" y="2" width="1" height="1"/><rect x="488" y="4" width="1" height="1"/><rect x="492" y="0" width="1" height="1"/><rect x="494" y="2" width="1" height="1"/><rect x="492" y="4" width="1" height="1"/><rect x="496" y="0" width="1" height="1"/><rect x="498" y="2" width="1" height="1"/><rect x="496" y="4" width="1" height="1"/><rect x="500" y="0" width="1" height="1"/><rect x="502" y="2" width="1" height="1"/><rect x="500" y="4" width="1" height="1"/><rect x="504" y="0" width="1" height="1"/><rect x="506" y="2" width="1" height="1"/><rect x="504" y="4" width="1" height="1"/><rect x="508" y="0" width="1" height="1"/><rect x="510" y="2" width="1" height="1"/><rect x="508" y="4" width="1" height="1"/><rect x="512" y="0" width="1" height="1"/><rect x="514" y="2" width="1" height="1"/><rect x="512" y="4" width="1" height="1"/><rect x="516" y="0" width="1" height="1"/><rect x="518" y="2" width="1" height="1"/><rect x="516" y="4" width="1" height="1"/><rect x="520" y="0" width="1" height="1"/><rect x="522" y="2" width="1" height="1"/><rect x="520" y="4" width="1" height="1"/><rect x="524" y="0" width="1" height="1"/><rect x="526" y="2" width="1" height="1"/><rect x="524" y="4" width="1" height="1"/><rect x="528" y="0" width="1" height="1"/><rect x="530" y="2" width="1" height="1"/><rect x="528" y="4" width="1" height="1"/><rect x="532" y="0" width="1" height="1"/><rect x="534" y="2" width="1" height="1"/><rect x="532" y="4" width="1" height="1"/><rect x="536" y="0" width="1" height="1"/><rect x="538" y="2" width="1" height="1"/><rect x="536" y="4" width="1" height="1"/><rect x="540" y="0" width="1" height="1"/><rect x="542" y="2" width="1" height="1"/><rect x="540" y="4" width="1" height="1"/><rect x="544" y="0" width="1" height="1"/><rect x="546" y="2" width="1" height="1"/><rect x="544" y="4" width="1" height="1"/><rect x="548" y="0" width="1" height="1"/><rect x="550" y="2" width="1" height="1"/><rect x="548" y="4" width="1" height="1"/><rect x="552" y="0" width="1" height="1"/><rect x="554" y="2" width="1" height="1"/><rect x="552" y="4" width="1" height="1"/><rect x="556" y="0" width="1" height="1"/><rect x="558" y="2" width="1" height="1"/><rect x="556" y="4" width="1" height="1"/><rect x="560" y="0" width="1" height="1"/><rect x="562" y="2" width="1" height="1"/><rect x="560" y="4" width="1" height="1"/><rect x="564" y="0" width="1" height="1"/><rect x="566" y="2" width="1" height="1"/><rect x="564" y="4" width="1" height="1"/><rect x="568" y="0" width="1" height="1"/><rect x="570" y="2" width="1" height="1"/><rect x="568" y="4" width="1" height="1"/><rect x="572" y="0" width="1" height="1"/><rect x="574" y="2" width="1" height="1"/><rect x="572" y="4" width="1" height="1"/><rect x="576" y="0" width="1" height="1"/><rect x="578" y="2" width="1" height="1"/><rect x="576" y="4" width="1" height="1"/><rect x="580" y="0" width="1" height="1"/><rect x="582" y="2" width="1" height="1"/><rect x="580" y="4" width="1" height="1"/><rect x="584" y="0" width="1" height="1"/><rect x="586" y="2" width="1" height="1"/><rect x="584" y="4" width="1" height="1"/><rect x="588" y="0" width="1" height="1"/><rect x="590" y="2" width="1" height="1"/><rect x="588" y="4" width="1" height="1"/><rect x="592" y="0" width="1" height="1"/><rect x="594" y="2" width="1" height="1"/><rect x="592" y="4" width="1" height="1"/><rect x="596" y="0" width="1" height="1"/><rect x="598" y="2" width="1" height="1"/><rect x="596" y="4" width="1" height="1"/><rect x="600" y="0" width="1" height="1"/><rect x="602" y="2" width="1" height="1"/><rect x="600" y="4" width="1" height="1"/><rect x="604" y="0" width="1" height="1"/><rect x="606" y="2" width="1" height="1"/><rect x="604" y="4" width="1" height="1"/><rect x="608" y="0" width="1" height="1"/><rect x="610" y="2" width="1" height="1"/><rect x="608" y="4" width="1" height="1"/><rect x="612" y="0" width="1" height="1"/><rect x="614" y="2" width="1" height="1"/><rect x="612" y="4" width="1" height="1"/><rect x="616" y="0" width="1" height="1"/><rect x="618" y="2" width="1" height="1"/><rect x="616" y="4" width="1" height="1"/><rect x="620" y="0" width="1" height="1"/><rect x="622" y="2" width="1" height="1"/><rect x="620" y="4" width="1" height="1"/><rect x="624" y="0" width="1" height="1"/><rect x="626" y="2" width="1" height="1"/><rect x="624" y="4" width="1" height="1"/><rect x="628" y="0" width="1" height="1"/><rect x="630" y="2" width="1" height="1"/><rect x="628" y="4" width="1" height="1"/><rect x="632" y="0" width="1" height="1"/><rect x="634" y="2" width="1" height="1"/><rect x="632" y="4" width="1" height="1"/><rect x="636" y="0" width="1" height="1"/><rect x="638" y="2" width="1" height="1"/><rect x="636" y="4" width="1" height="1"/><rect x="640" y="0" width="1" height="1"/><rect x="642" y="2" width="1" height="1"/><rect x="640" y="4" width="1" height="1"/><rect x="644" y="0" width="1" height="1"/><rect x="646" y="2" width="1" height="1"/><rect x="644" y="4" width="1" height="1"/><rect x="648" y="0" width="1" height="1"/><rect x="650" y="2" width="1" height="1"/><rect x="648" y="4" width="1" height="1"/><rect x="652" y="0" width="1" height="1"/><rect x="654" y="2" width="1" height="1"/><rect x="652" y="4" width="1" height="1"/><rect x="656" y="0" width="1" height="1"/><rect x="658" y="2" width="1" height="1"/><rect x="656" y="4" width="1" height="1"/><rect x="660" y="0" width="1" height="1"/><rect x="662" y="2" width="1" height="1"/><rect x="660" y="4" width="1" height="1"/><rect x="664" y="0" width="1" height="1"/><rect x="666" y="2" width="1" height="1"/><rect x="664" y="4" width="1" height="1"/><rect x="668" y="0" width="1" height="1"/><rect x="670" y="2" width="1" height="1"/><rect x="668" y="4" width="1" height="1"/><rect x="672" y="0" width="1" height="1"/><rect x="674" y="2" width="1" height="1"/><rect x="672" y="4" width="1" height="1"/><rect x="676" y="0" width="1" height="1"/><rect x="678" y="2" width="1" height="1"/><rect x="676" y="4" width="1" height="1"/><rect x="680" y="0" width="1" height="1"/><rect x="682" y="2" width="1" height="1"/><rect x="680" y="4" width="1" height="1"/><rect x="684" y="0" width="1" height="1"/><rect x="686" y="2" width="1" height="1"/><rect x="684" y="4" width="1" height="1"/><rect x="688" y="0" width="1" height="1"/><rect x="690" y="2" width="1" height="1"/><rect x="688" y="4" width="1" height="1"/><rect x="692" y="0" width="1" height="1"/><rect x="694" y="2" width="1" height="1"/><rect x="692" y="4" width="1" height="1"/><rect x="696" y="0" width="1" height="1"/><rect x="698" y="2" width="1" height="1"/><rect x="696" y="4" width="1" height="1"/><rect x="700" y="0" width="1" height="1"/><rect x="702" y="2" width="1" height="1"/><rect x="700" y="4" width="1" height="1"/><rect x="704" y="0" width="1" height="1"/><rect x="706" y="2" width="1" height="1"/><rect x="704" y="4" width="1" height="1"/><rect x="708" y="0" width="1" height="1"/><rect x="710" y="2" width="1" height="1"/><rect x="708" y="4" width="1" height="1"/><rect x="712" y="0" width="1" height="1"/><rect x="714" y="2" width="1" height="1"/><rect x="712" y="4" width="1" height="1"/><rect x="716" y="0" width="1" height="1"/><rect x="718" y="2" width="1" height="1"/><rect x="716" y="4" width="1" height="1"/><rect x="720" y="0" width="1" height="1"/><rect x="722" y="2" width="1" height="1"/><rect x="720" y="4" width="1" height="1"/><rect x="724" y="0" width="1" height="1"/><rect x="726" y="2" width="1" height="1"/><rect x="724" y="4" width="1" height="1"/><rect x="728" y="0" width="1" height="1"/><rect x="730" y="2" width="1" height="1"/><rect x="728" y="4" width="1" height="1"/><rect x="732" y="0" width="1" height="1"/><rect x="734" y="2" width="1" height="1"/><rect x="732" y="4" width="1" height="1"/><rect x="736" y="0" width="1" height="1"/><rect x="738" y="2" width="1" height="1"/><rect x="736" y="4" width="1" height="1"/><rect x="740" y="0" width="1" height="1"/><rect x="742" y="2" width="1" height="1"/><rect x="740" y="4" width="1" height="1"/><rect x="744" y="0" width="1" height="1"/><rect x="746" y="2" width="1" height="1"/><rect x="744" y="4" width="1" height="1"/><rect x="748" y="0" width="1" height="1"/><rect x="750" y="2" width="1" height="1"/><rect x="748" y="4" width="1" height="1"/><rect x="752" y="0" width="1" height="1"/><rect x="754" y="2" width="1" height="1"/><rect x="752" y="4" width="1" height="1"/><rect x="756" y="0" width="1" height="1"/><rect x="758" y="2" width="1" height="1"/><rect x="756" y="4" width="1" height="1"/><rect x="760" y="0" width="1" height="1"/><rect x="762" y="2" width="1" height="1"/><rect x="760" y="4" width="1" height="1"/><rect x="764" y="0" width="1" height="1"/><rect x="766" y="2" width="1" height="1"/><rect x="764" y="4" width="1" height="1"/><rect x="768" y="0" width="1" height="1"/><rect x="770" y="2" width="1" height="1"/><rect x="768" y="4" width="1" height="1"/><rect x="772" y="0" width="1" height="1"/><rect x="774" y="2" width="1" height="1"/><rect x="772" y="4" width="1" height="1"/><rect x="776" y="0" width="1" height="1"/><rect x="778" y="2" width="1" height="1"/><rect x="776" y="4" width="1" height="1"/><rect x="780" y="0" width="1" height="1"/><rect x="782" y="2" width="1" height="1"/><rect x="780" y="4" width="1" height="1"/><rect x="784" y="0" width="1" height="1"/><rect x="786" y="2" width="1" height="1"/><rect x="784" y="4" width="1" height="1"/><rect x="788" y="0" width="1" height="1"/><rect x="790" y="2" width="1" height="1"/><rect x="788" y="4" width="1" height="1"/><rect x="792" y="0" width="1" height="1"/><rect x="794" y="2" width="1" height="1"/><rect x="792" y="4" width="1" height="1"/><rect x="796" y="0" width="1" height="1"/><rect x="798" y="2" width="1" height="1"/><rect x="796" y="4" width="1" height="1"/><rect x="800" y="0" width="1" height="1"/><rect x="802" y="2" width="1" height="1"/><rect x="800" y="4" width="1" height="1"/><rect x="804" y="0" width="1" height="1"/><rect x="806" y="2" width="1" height="1"/><rect x="804" y="4" width="1" height="1"/><rect x="808" y="0" width="1" height="1"/><rect x="810" y="2" width="1" height="1"/><rect x="808" y="4" width="1" height="1"/><rect x="812" y="0" width="1" height="1"/><rect x="814" y="2" width="1" height="1"/><rect x="812" y="4" width="1" height="1"/><rect x="816" y="0" width="1" height="1"/><rect x="818" y="2" width="1" height="1"/><rect x="816" y="4" width="1" height="1"/><rect x="820" y="0" width="1" height="1"/><rect x="822" y="2" width="1" height="1"/><rect x="820" y="4" width="1" height="1"/><rect x="824" y="0" width="1" height="1"/><rect x="826" y="2" width="1" height="1"/><rect x="824" y="4" width="1" height="1"/><rect x="828" y="0" width="1" height="1"/><rect x="830" y="2" width="1" height="1"/><rect x="828" y="4" width="1" height="1"/><rect x="832" y="0" width="1" height="1"/><rect x="834" y="2" width="1" height="1"/><rect x="832" y="4" width="1" height="1"/><rect x="836" y="0" width="1" height="1"/><rect x="838" y="2" width="1" height="1"/><rect x="836" y="4" width="1" height="1"/><rect x="840" y="0" width="1" height="1"/><rect x="842" y="2" width="1" height="1"/><rect x="840" y="4" width="1" height="1"/><rect x="844" y="0" width="1" height="1"/><rect x="846" y="2" width="1" height="1"/><rect x="844" y="4" width="1" height="1"/><rect x="848" y="0" width="1" height="1"/><rect x="850" y="2" width="1" height="1"/><rect x="848" y="4" width="1" height="1"/><rect x="852" y="0" width="1" height="1"/><rect x="854" y="2" width="1" height="1"/><rect x="852" y="4" width="1" height="1"/><rect x="856" y="0" width="1" height="1"/><rect x="858" y="2" width="1" height="1"/><rect x="856" y="4" width="1" height="1"/><rect x="860" y="0" width="1" height="1"/><rect x="862" y="2" width="1" height="1"/><rect x="860" y="4" width="1" height="1"/></g></svg>
<svg style="left:958px;top:507px;" width="8" height="4" viewBox="0 0 8 4"><path d="M0 0 H8 L4 4 Z" fill="#424242"/></svg>
<svg style="left:974px;top:503px;" width="9" height="12" viewBox="0 0 9 12"><path d="M2 1 H7 M2.5 1 V7 M6 1 V7 M5 1 V7 M0.5 7 H8.5 M4.5 7 V11.5" fill="none" stroke="#424242" stroke-width="1.1"/></svg>
<svg style="left:990px;top:504px;" width="10" height="10" viewBox="0 0 10 10"><path d="M1 1 L9 9 M9 1 L1 9" stroke="#424242" stroke-width="1.5"/></svg>
<svg style="left:41px;top:528px;" width="12" height="12" viewBox="0 0 12 12"><path d="M0.5 1 H11.5 L7.3 6 V11.5 L4.7 9.5 V6 Z" fill="#424242"/></svg>
<svg style="left:61px;top:533px;" width="6" height="3" viewBox="0 0 6 3"><path d="M0 0 H6 L3 3 Z" fill="#717171"/></svg>
<div style="left:73px;top:524px;width:1px;height:20px;background:#cccedb;"></div>
<svg style="left:82px;top:527px;" width="14" height="14" viewBox="0 0 14 14"><circle cx="7" cy="7" r="6.5" fill="#c6c7cd"/><path d="M4.3 4.3 L9.7 9.7 M9.7 4.3 L4.3 9.7" stroke="#eeeef2" stroke-width="1.8"/></svg>
<span class="t" style="left:101px;top:528.14px;font:12px/14px 'Liberation Sans', sans-serif;color:#a2a4a5;transform:scaleX(0.9136);transform-origin:0 50%;">0 Errors</span>
<div style="left:151px;top:524px;width:1px;height:20px;background:#cccedb;"></div>
<svg style="left:159px;top:527px;" width="15" height="14" viewBox="0 0 15 14"><path d="M7.5 0.5 L14.5 13.5 H0.5 Z" fill="#d6d7dc"/><path d="M7.5 5 V9.5 M7.5 10.8 V12.2" stroke="#a2a4a5" stroke-width="1.4"/></svg>
<span class="t" style="left:179px;top:528.14px;font:12px/14px 'Liberation Sans', sans-serif;color:#a2a4a5;transform:scaleX(0.9295);transform-origin:0 50%;">0 Warnings</span>
<div style="left:806px;top:522px;width:200px;height:21px;background:#fff;"></div>
<span class="t" style="left:811px;top:526.14px;font:12px/14px 'Liberation Sans', sans-serif;color:#6d6d6d;transform:scaleX(0.9330);transform-origin:0 50%;">Search Error List</span>
<svg style="left:977px;top:525px;" width="16" height="16" viewBox="0 0 16 16"><circle cx="9.5" cy="6" r="3.4" fill="none" stroke="#717171" stroke-width="1.7"/><path d="M7 8.6 L3 12.6" stroke="#717171" stroke-width="2" stroke-linecap="round"/></svg>
<svg style="left:996px;top:531px;" width="6" height="3" viewBox="0 0 6 3"><path d="M0 0 H6 L3 3 Z" fill="#717171"/></svg>
<div style="left:31px;top:548px;width:975px;height:151px;background:#f5f5f5;"></div>
<div style="left:31px;top:571px;width:975px;height:1px;background:#cccedb;"></div>
<div style="left:47px;top:548px;width:1px;height:23px;background:#cccedb;"></div>
<div style="left:65px;top:548px;width:1px;height:23px;background:#cccedb;"></div>
<div style="left:815px;top:548px;width:1px;height:23px;background:#cccedb;"></div>
<div style="left:885px;top:548px;width:1px;height:23px;background:#cccedb;"></div>
<div style="left:1005px;top:548px;width:1px;height:23px;background:#cccedb;"></div>
<span class="t" style="left:71px;top:553.14px;font:12px/14px 'Liberation Sans', sans-serif;color:#1e1e1e;">Description</span>
<span class="t" style="left:821px;top:553.14px;font:12px/14px 'Liberation Sans', sans-serif;color:#1e1e1e;transform:scaleX(0.9514);transform-origin:0 50%;">Colu...</span>
<span class="t" style="left:891px;top:553.14px;font:12px/14px 'Liberation Sans', sans-serif;color:#1e1e1e;letter-spacing:-0.051px;">Project</span>
<svg style="left:783px;top:557px;" width="9" height="5" viewBox="0 0 9 5"><path d="M0 5 H9 L4.5 0 Z" fill="#717171"/></svg>
<svg style="left:871px;top:557px;" width="9" height="5" viewBox="0 0 9 5"><path d="M0 5 H9 L4.5 0 Z" fill="#717171"/></svg>
<svg style="left:938px;top:557px;" width="9" height="5" viewBox="0 0 9 5"><path d="M0 5 H9 L4.5 0 Z" fill="#717171"/></svg>
<span class="t" style="left:1016px;top:115.14px;font:12px/14px 'Liberation Sans', sans-serif;color:#1e1e1e;letter-spacing:-0.082px;">Solution Explorer</span>
<svg style="left:1113px;top:119px;" width="192" height="5" viewBox="0 0 192 5"><g fill="#999ba8"><rect x="0" y="0" width="1" height="1"/><rect x="2" y="2" width="1" height="1"/><rect x="0" y="4" width="1" height="1"/><rect x="4" y="0" width="1" height="1"/><rect x="6" y="2" width="1" height="1"/><rect x="4" y="4" width="1" height="1"/><rect x="8" y="0" width="1" height="1"/><rect x="10" y="2" width="1" height="1"/><rect x="8" y="4" width="1" height="1"/><rect x="12" y="0" width="1" height="1"/><rect x="14" y="2" width="1" height="1"/><rect x="12" y="4" width="1" height="1"/><rect x="16" y="0" width="1" height="1"/><rect x="18" y="2" width="1" height="1"/><rect x="16" y="4" width="1" height="1"/><rect x="20" y="0" width="1" height="1"/><rect x="22" y="2" width="1" height="1"/><rect x="20" y="4" width="1" height="1"/><rect x="24" y="0" width="1" height="1"/><rect x="26" y="2" width="1" height="1"/><rect x="24" y="4" width="1" height="1"/><rect x="28" y="0" width="1" height="1"/><rect x="30" y="2" width="1" height="1"/><rect x="28" y="4" width="1" height="1"/><rect x="32" y="0" width="1" height="1"/><rect x="34" y="2" width="1" height="1"/><rect x="32" y="4" width="1" height="1"/><rect x="36" y="0" width="1" height="1"/><rect x="38" y="2" width="1" height="1"/><rect x="36" y="4" width="1" height="1"/><rect x="40" y="0" width="1" height="1"/><rect x="42" y="2" width="1" height="1"/><rect x="40" y="4" width="1" height="1"/><rect x="44" y="0" width="1" height="1"/><rect x="46" y="2" width="1" height="1"/><rect x="44" y="4" width="1" height="1"/><rect x="48" y="0" width="1" height="1"/><rect x="50" y="2" width="1" height="1"/><rect x="48" y="4" width="1" height="1"/><rect x="52" y="0" width="1" height="1"/><rect x="54" y="2" width="1" height="1"/><rect x="52" y="4" width="1" height="1"/><rect x="56" y="0" width="1" height="1"/><rect x="58" y="2" width="1" height="1"/><rect x="56" y="4" width="1" height="1"/><rect x="60" y="0" width="1" height="1"/><rect x="62" y="2" width="1" height="1"/><rect x="60" y="4" width="1" height="1"/><rect x="64" y="0" width="1" height="1"/><rect x="66" y="2" width="1" height="1"/><rect x="64" y="4" width="1" height="1"/><rect x="68" y="0" width="1" height="1"/><rect x="70" y="2" width="1" height="1"/><rect x="68" y="4" width="1" height="1"/><rect x="72" y="0" width="1" height="1"/><rect x="74" y="2" width="1" height="1"/><rect x="72" y="4" width="1" height="1"/><rect x="76" y="0" width="1" height="1"/><rect x="78" y="2" width="1" height="1"/><rect x="76" y="4" width="1" height="1"/><rect x="80" y="0" width="1" height="1"/><rect x="82" y="2" width="1" height="1"/><rect x="80" y="4" width="1" height="1"/><rect x="84" y="0" width="1" height="1"/><rect x="86" y="2" width="1" height="1"/><rect x="84" y="4" width="1" height="1"/><rect x="88" y="0" width="1" height="1"/><rect x="90" y="2" width="1" height="1"/><rect x="88" y="4" width="1" height="1"/><rect x="92" y="0" width="1" height="1"/><rect x="94" y="2" width="1" height="1"/><rect x="92" y="4" width="1" height="1"/><rect x="96" y="0" width="1" height="1"/><rect x="98" y="2" width="1" height="1"/><rect x="96" y="4" width="1" height="1"/><rect x="100" y="0" width="1" height="1"/><rect x="102" y="2" width="1" height="1"/><rect x="100" y="4" width="1" height="1"/><rect x="104" y="0" width="1" height="1"/><rect x="106" y="2" width="1" height="1"/><rect x="104" y="4" width="1" height="1"/><rect x="108" y="0" width="1" height="1"/><rect x="110" y="2" width="1" height="1"/><rect x="108" y="4" width="1" height="1"/><rect x="112" y="0" width="1" height="1"/><rect x="114" y="2" width="1" height="1"/><rect x="112" y="4" width="1" height="1"/><rect x="116" y="0" width="1" height="1"/><rect x="118" y="2" width="1" height="1"/><rect x="116" y="4" width="1" height="1"/><rect x="120" y="0" width="1" height="1"/><rect x="122" y="2" width="1" height="1"/><rect x="120" y="4" width="1" height="1"/><rect x="124" y="0" width="1" height="1"/><rect x="126" y="2" width="1" height="1"/><rect x="124" y="4" width="1" height="1"/><rect x="128" y="0" width="1" height="1"/><rect x="130" y="2" width="1" height="1"/><rect x="128" y="4" width="1" height="1"/><rect x="132" y="0" width="1" height="1"/><rect x="134" y="2" width="1" height="1"/><rect x="132" y="4" width="1" height="1"/><rect x="136" y="0" width="1" height="1"/><rect x="138" y="2" width="1" height="1"/><rect x="136" y="4" width="1" height="1"/><rect x="140" y="0" width="1" height="1"/><rect x="142" y="2" width="1" height="1"/><rect x="140" y="4" width="1" height="1"/><rect x="144" y="0" width="1" height="1"/><rect x="146" y="2" width="1" height="1"/><rect x="144" y="4" width="1" height="1"/><rect x="148" y="0" width="1" height="1"/><rect x="150" y="2" width="1" height="1"/><rect x="148" y="4" width="1" height="1"/><rect x="152" y="0" width="1" height="1"/><rect x="154" y="2" width="1" height="1"/><rect x="152" y="4" width="1" height="1"/><rect x="156" y="0" width="1" height="1"/><rect x="158" y="2" width="1" height="1"/><rect x="156" y="4" width="1" height="1"/><rect x="160" y="0" width="1" height="1"/><rect x="162" y="2" width="1" height="1"/><rect x="160" y="4" width="1" height="1"/><rect x="164" y="0" width="1" height="1"/><rect x="166" y="2" width="1" height="1"/><rect x="164" y="4" width="1" height="1"/><rect x="168" y="0" width="1" height="1"/><rect x="170" y="2" width="1" height="1"/><rect x="168" y="4" width="1" height="1"/><rect x="172" y="0" width="1" height="1"/><rect x="174" y="2" width="1" height="1"/><rect x="172" y="4" width="1" height="1"/><rect x="176" y="0" width="1" height="1"/><rect x="178" y="2" width="1" height="1"/><rect x="176" y="4" width="1" height="1"/><rect x="180" y="0" width="1" height="1"/><rect x="182" y="2" width="1" height="1"/><rect x="180" y="4" width="1" height="1"/><rect x="184" y="0" width="1" height="1"/><rect x="186" y="2" width="1" height="1"/><rect x="184" y="4" width="1" height="1"/><rect x="188" y="0" width="1" height="1"/><rect x="190" y="2" width="1" height="1"/><rect x="188" y="4" width="1" height="1"/></g></svg>
<svg style="left:1311px;top:119px;" width="8" height="4" viewBox="0 0 8 4"><path d="M0 0 H8 L4 4 Z" fill="#424242"/></svg>
<svg style="left:1328px;top:115px;" width="9" height="12" viewBox="0 0 9 12"><path d="M2 1 H7 M2.5 1 V7 M6 1 V7 M5 1 V7 M0.5 7 H8.5 M4.5 7 V11.5" fill="none" stroke="#424242" stroke-width="1.1"/></svg>
<svg style="left:1344px;top:116px;" width="10" height="10" viewBox="0 0 10 10"><path d="M1 1 L9 9 M9 1 L1 9" stroke="#424242" stroke-width="1.5"/></svg>
<svg style="left:1020px;top:139px;" width="13" height="13" viewBox="0 0 13 13"><circle cx="6.5" cy="6.5" r="6" fill="#c6c7cd"/><path d="M10 6.5 H4 M6.5 3.8 L3.8 6.5 L6.5 9.2" fill="none" stroke="#eeeef2" stroke-width="1.5"/></svg>
<svg style="left:1042px;top:139px;" width="13" height="13" viewBox="0 0 13 13"><circle cx="6.5" cy="6.5" r="6" fill="#c6c7cd"/><path d="M3 6.5 H9 M6.5 3.8 L9.2 6.5 L6.5 9.2" fill="none" stroke="#eeeef2" stroke-width="1.5"/></svg>
<svg style="left:1063px;top:138px;" width="16" height="16" viewBox="0 0 16 16"><path d="M0.6 8.2 L8 1 L15.4 8.2" fill="none" stroke="#424242" stroke-width="1.5"/><path d="M2.6 7.6 L8 2.4 L13.4 7.6 V14.6 H2.6 Z" fill="#424242"/><rect x="6.4" y="9.4" width="3.2" height="5.2" fill="#eeeef2"/><rect x="10.8" y="1.4" width="2" height="4" fill="#424242"/></svg>
<div style="left:1085px;top:136px;width:1px;height:20px;background:#cccedb;"></div>
<svg style="left:1094px;top:138px;" width="16" height="16" viewBox="0 0 16 16"><circle cx="9" cy="9" r="5" fill="none" stroke="#424242" stroke-width="1.8"/><path d="M9 6.5 V9.3 H11.2" fill="none" stroke="#424242" stroke-width="1.2"/><path d="M1.5 1.5 L4.5 4.5" stroke="#424242" stroke-width="1.6"/></svg>
<svg style="left:1115px;top:145px;" width="6" height="3" viewBox="0 0 6 3"><path d="M0 0 H6 L3 3 Z" fill="#717171"/></svg>
<svg style="left:1128px;top:139px;" width="14" height="14" viewBox="0 0 14 14"><path d="M3 4.5 H12 M9.5 2 L12.2 4.5 L9.5 7 M11 9.5 H2 M4.5 7 L1.8 9.5 L4.5 12" fill="none" stroke="#424242" stroke-width="1.6"/></svg>
<svg style="left:1151px;top:139px;" width="14" height="14" viewBox="0 0 14 14"><path d="M3 7 C3 3 8 2 10 4.5 M11 7 C11 11 6 12 4 9.5" fill="none" stroke="#c6c7cd" stroke-width="2"/><path d="M11.5 2 V6 H7.5 Z M2.5 12 V8 H6.5 Z" fill="#c6c7cd"/></svg>
<svg style="left:1173px;top:139px;" width="14" height="14" viewBox="0 0 14 14"><path d="M4.5 4 V1.5 H12.5 V9.5 H10" fill="none" stroke="#424242" stroke-width="1.4"/><rect x="1.5" y="4.5" width="8" height="8" fill="none" stroke="#424242" stroke-width="1.4"/><path d="M3.5 8.5 H7.5" stroke="#424242" stroke-width="1.5"/></svg>
<svg style="left:1195px;top:138px;" width="15" height="16" viewBox="0 0 15 16"><path d="M4.5 3.5 H10 L13 6.5 V14.5 H4.5 Z" fill="none" stroke="#424242" stroke-width="1.2"/><path d="M6.5 8 H11 M6.5 10 H11 M6.5 12 H11" stroke="#424242"/><path d="M1.5 10 V1.5 H8" fill="none" stroke="#424242" stroke-dasharray="1.5 1.5" stroke-width="1.2"/></svg>
<div style="left:1216px;top:136px;width:1px;height:20px;background:#cccedb;"></div>
<svg style="left:1225px;top:140px;" width="14" height="10" viewBox="0 0 14 10"><path d="M5 1 L1.5 5 L5 9 M9 1 L12.5 5 L9 9" fill="none" stroke="#424242" stroke-width="1.4"/></svg>
<svg style="left:1248px;top:139px;" width="13" height="13" viewBox="0 0 13 13"><path d="M1.6 10.6 L6.6 5.6" stroke="#424242" stroke-width="2.8" stroke-linecap="round"/><circle cx="8.2" cy="3.8" r="3.4" fill="#424242"/><path d="M8.4 3.6 L12.4 -0.4 L13 3 L10.4 5.8 Z" fill="#eeeef2"/></svg>
<svg style="left:1268px;top:138px;" width="16" height="15" viewBox="0 0 16 15"><path d="M4.5 5 V1.5 H11 L14.5 5 V12.5 H8" fill="none" stroke="#424242" stroke-width="1.3"/><circle cx="5" cy="9.5" r="2.8" fill="none" stroke="#00539c" stroke-width="1.4"/><path d="M3 11.5 L0.8 14" stroke="#00539c" stroke-width="1.6"/></svg>
<div style="left:1012px;top:160px;width:348px;height:21px;background:#fff;"></div>
<span class="t" style="left:1017px;top:164.14px;font:12px/14px 'Liberation Sans', sans-serif;color:#6d6d6d;transform:scaleX(0.9678);transform-origin:0 50%;">Search Solution Explorer (Ctrl+;)</span>
<svg style="left:1330px;top:163px;" width="16" height="16" viewBox="0 0 16 16"><circle cx="9.5" cy="6" r="3.4" fill="none" stroke="#717171" stroke-width="1.7"/><path d="M7 8.6 L3 12.6" stroke="#717171" stroke-width="2" stroke-linecap="round"/></svg>
<svg style="left:1350px;top:169px;" width="6" height="3" viewBox="0 0 6 3"><path d="M0 0 H6 L3 3 Z" fill="#717171"/></svg>
<div style="left:1012px;top:181px;width:348px;height:518px;background:#f5f5f5;"></div>
<div style="left:1012px;top:257px;width:348px;height:19px;background:#cccedb;"></div>
<span class="t" style="left:1045px;top:188.14px;font:12px/14px 'Liberation Sans', sans-serif;color:#1e1e1e;letter-spacing:-0.098px;">Solution 'Kuis BKPM 2' (1 project)</span>
<span class="t" style="left:1063px;top:206.14px;font:bold 12px/14px 'Liberation Sans', sans-serif;color:#1e1e1e;transform:scaleX(0.9372);transform-origin:0 50%;">Kuis BKPM 2</span>
<span class="t" style="left:1081px;top:224.14px;font:12px/14px 'Liberation Sans', sans-serif;color:#1e1e1e;letter-spacing:0.031px;">My Project</span>
<span class="t" style="left:1081px;top:242.14px;font:12px/14px 'Liberation Sans', sans-serif;color:#1e1e1e;transform:scaleX(1.0402);transform-origin:0 50%;">App.config</span>
<span class="t" style="left:1081px;top:260.14px;font:12px/14px 'Liberation Sans', sans-serif;color:#1e1e1e;letter-spacing:-0.086px;">Form1.vb</span>
<span class="t" style="left:1081px;top:278.14px;font:12px/14px 'Liberation Sans', sans-serif;color:#1e1e1e;transform:scaleX(0.9022);transform-origin:0 50%;">LOGO DIREKTORAT JENDERAL PAJAK.jpg</span>
<svg style="left:1025px;top:188px;" width="15" height="14" viewBox="0 0 15 14"><rect x="1" y="1" width="13" height="9.5" fill="none" stroke="#424242" stroke-width="1.3"/><rect x="0" y="7" width="8" height="7" fill="#f5f5f5"/><path d="M6.5 7.5 L7.5 8 V13 L6.5 13.5 L3.5 11 L2 12 L1.3 11.6 V9.4 L2 9 L3.5 10 Z" fill="#424242"/></svg>
<svg style="left:1022px;top:209px;" width="8" height="8" viewBox="0 0 8 8"><path d="M7 0.5 V7 H0.5 Z" fill="#424242"/></svg>
<svg style="left:1043px;top:206px;" width="14" height="12" viewBox="0 0 14 12"><rect x="0.5" y="0.5" width="13" height="11" fill="#fff" stroke="#00539c"/></svg>
<span class="t" style="left:1045px;top:208.87px;font:bold 7px/8px 'Liberation Sans', sans-serif;color:#424242;letter-spacing:0.133px;">VB</span>
<svg style="left:1062px;top:224px;" width="13" height="13" viewBox="0 0 13 13"><path d="M1.6 10.6 L6.6 5.6" stroke="#424242" stroke-width="2.8" stroke-linecap="round"/><circle cx="8.2" cy="3.8" r="3.4" fill="#424242"/><path d="M8.4 3.6 L12.4 -0.4 L13 3 L10.4 5.8 Z" fill="#f5f5f5"/></svg>
<svg style="left:1062px;top:242px;" width="14" height="14" viewBox="0 0 14 14"><path d="M3.5 4.5 V1.6 H9 L12.4 5 V12.4 H6.5" fill="none" stroke="#424242" stroke-width="1.3"/><path d="M3.2 7 V13" stroke="#424242" stroke-width="1.8"/><path d="M1 5.5 V7.6 C1 9.4 5.4 9.4 5.4 7.6 V5.5" fill="none" stroke="#424242" stroke-width="1.5"/></svg>
<svg style="left:1040px;top:261px;" width="8" height="12" viewBox="0 0 8 12"><path d="M1.2 1.4 L6.4 6 L1.2 10.6 Z" fill="none" stroke="#1e1e1e" stroke-width="1.3"/></svg>
<svg style="left:1060px;top:259px;" width="16" height="15" viewBox="0 0 16 15"><rect x="0" y="0" width="16" height="15" rx="1" fill="#f8f8f8"/><rect x="1.6" y="1.6" width="12.8" height="11.8" fill="#fff" stroke="#424242" stroke-width="1.3"/><rect x="1" y="1" width="14" height="2.6" fill="#424242"/><path d="M3.5 6.2 H6 M3.5 10 H6" stroke="#424242" stroke-width="1.1"/><rect x="7.6" y="5.2" width="4.6" height="2" fill="none" stroke="#424242" stroke-width="1"/><rect x="7.6" y="9" width="4.6" height="2" fill="none" stroke="#424242" stroke-width="1"/></svg>
<svg style="left:1061px;top:278px;" width="14" height="13" viewBox="0 0 14 13"><rect x="0.9" y="0.9" width="12.2" height="11.2" fill="#f5f5f5" stroke="#424242" stroke-width="1.8"/><path d="M1.5 8.6 C3.4 6.2 5 6.4 6.6 7.8 C8 9 9.8 7.2 12.5 7.8" fill="none" stroke="#424242" stroke-width="1.3"/><circle cx="9.2" cy="4.4" r="1.1" fill="#424242"/></svg>
<span class="t" style="left:1073.3px;top:651.89px;font:18.5px/22px 'Liberation Sans', sans-serif;color:#a9a9ab;transform:scaleX(1.0712);transform-origin:0 50%;">Activate Windows</span>
<span class="t" style="left:1073.3px;top:676.10px;font:15px/18px 'Liberation Sans', sans-serif;color:#a9a9ab;letter-spacing:-0.042px;">Go to Settings to activate Windows.</span>
<div style="left:0px;top:705px;width:1366px;height:23px;background:#ca5100;"></div>
<span class="t" style="left:4px;top:710.14px;font:12px/14px 'Liberation Sans', sans-serif;color:#fff;transform:scaleX(0.9514);transform-origin:0 50%;">Ready</span>
<span class="t" style="left:1012px;top:710.14px;font:12px/14px 'Liberation Sans', sans-serif;color:#fff;transform:scaleX(0.9324);transform-origin:0 50%;">Ln 61</span>
<span class="t" style="left:1104px;top:710.14px;font:12px/14px 'Liberation Sans', sans-serif;color:#fff;transform:scaleX(0.9281);transform-origin:0 50%;">Col 1</span>
<span class="t" style="left:1196px;top:710.14px;font:12px/14px 'Liberation Sans', sans-serif;color:#fff;transform:scaleX(0.9070);transform-origin:0 50%;">Ch 1</span>
<span class="t" style="left:1332px;top:710.14px;font:12px/14px 'Liberation Sans', sans-serif;color:#fff;transform:scaleX(0.8993);transform-origin:0 50%;">INS</span>
<div style="left:0px;top:728px;width:1366px;height:40px;background:#0b0e0b;background:linear-gradient(90deg,#0a0c0a 0%,#0b0e0b 45%,#0e120d 60%,#171d15 72%,#1a2117 80%,#141a12 90%,#0e110d 100%);"></div>
<div style="left:0px;top:728px;width:48px;height:40px;background:#050505;"></div>
<div style="left:48px;top:728px;width:344px;height:40px;background:#333333;"></div>
<svg style="left:16px;top:740px;" width="16" height="16" viewBox="0 0 16 16"><path d="M0 2.3 L6.6 1.4 V7.6 H0 Z M7.5 1.25 L16 0 V7.6 H7.5 Z M0 8.5 H6.6 V14.7 L0 13.8 Z M7.5 8.5 H16 V16 L7.5 14.8 Z" fill="#fff"/></svg>
<svg style="left:57px;top:737px;" width="22" height="22" viewBox="0 0 22 22"><circle cx="11" cy="11" r="9.2" fill="none" stroke="#fff" stroke-width="2.4"/></svg>
<span class="t" style="left:85.2px;top:739.10px;font:15px/18px 'Liberation Sans', sans-serif;color:#a9adb2;transform:scaleX(0.9549);transform-origin:0 50%;">Type here to search</span>
<svg style="left:365px;top:739px;" width="13" height="18" viewBox="0 0 13 18"><rect x="3.7" y="0.8" width="5.6" height="10" rx="2.2" fill="none" stroke="#9a9a9a" stroke-width="1.1"/><path d="M1 8 C1 15 12 15 12 8 M6.5 13.3 V16.5 M3.5 16.6 H9.5" fill="none" stroke="#9a9a9a" stroke-width="1.1"/></svg>
<svg style="left:405px;top:740px;" width="23" height="16" viewBox="0 0 23 16"><rect x="5" y="1.5" width="12.5" height="13" fill="none" stroke="#fff" stroke-width="1.3"/><path d="M3.5 3.5 H1.5 V12.5 H3.5 M19 3.5 H21 V12.5 H19" fill="none" stroke="#fff" stroke-width="1.2"/></svg>
<svg style="left:456px;top:736px;" width="23" height="23" viewBox="0 0 23 23"><path d="M1.5 10.5 C2.5 3 8 0.8 12 0.8 C18 0.8 22 5 21.8 12.5 H8.5 C8.7 16 12 17.6 15 17.6 C17.5 17.6 19.5 17 21 16 V20.3 C19 21.5 16.6 22.2 14 22.2 C7.5 22.2 3.5 18.5 3.5 13.5 C3.5 9.5 6 7 8.5 5.8 C5.5 6 3 8 1.5 10.5 Z M8.6 9 H15.6 C15.6 6.5 14.2 5 12.2 5 C10.2 5 8.9 6.8 8.6 9 Z" fill="#1b7fd4" fill-rule="evenodd"/></svg>
<svg style="left:505px;top:738px;" width="22" height="20" viewBox="0 0 22 20"><path d="M0.5 2 H8 L10 4 H21.5 V18 H0.5 Z" fill="#f5d66b"/><path d="M0.5 6 H21.5 V18.5 H0.5 Z" fill="#fbe391"/><path d="M4.5 19.5 V12 H17.5 V19.5 H14 V15 H8 V19.5 Z" fill="#2d9fe6"/><rect x="2" y="2.5" width="5" height="1.2" fill="#3c8fd8"/></svg>
<svg style="left:553px;top:735px;" width="23" height="25" viewBox="0 0 23 25"><path d="M6.5 8 C6.5 0.5 16.5 0.5 16.5 8" fill="none" stroke="#fff" stroke-width="1.4"/><path d="M0.5 7.5 L22.5 5.5 V24.5 L0.5 22.5 Z" fill="#fff"/><path d="M4.5 11 H10.5 V14.8 H4.5 Z M12 11 H18.5 V14.8 H12 Z M4.5 16 H10.5 V20 H4.5 Z M12 16 H18.5 V20 H12 Z" fill="#0b0e0b"/></svg>
<svg style="left:603px;top:738px;" width="21" height="20" viewBox="0 0 21 20"><rect x="0.7" y="0.7" width="19.6" height="18.6" fill="#10124e" stroke="#8aa7e8" stroke-width="1.4"/></svg>
<span class="t" style="left:606px;top:742.14px;font:bold 12px/14px 'Liberation Sans', sans-serif;color:#9db8ff;transform:scaleX(0.9532);transform-origin:0 50%;">Ps</span>
<svg style="left:651px;top:737px;" width="23" height="23" viewBox="0 0 23 23"><rect x="0" y="0" width="23" height="23" rx="5" fill="#e5392b"/><circle cx="11.5" cy="14" r="6.3" fill="#fff"/><circle cx="13" cy="14.5" r="2.6" fill="#e5392b"/><circle cx="5.5" cy="6.5" r="2" fill="#fff"/><circle cx="9.5" cy="4.5" r="2" fill="#fff"/><circle cx="14" cy="4.5" r="2" fill="#fff"/><circle cx="18" cy="6.5" r="2" fill="#fff"/></svg>
<svg style="left:700px;top:740px;" width="22" height="16" viewBox="0 0 22 16"><rect x="0" y="0" width="22" height="16" fill="#2b8fd6"/><rect x="1.5" y="1.5" width="19" height="13" fill="#49b1ea"/><circle cx="7" cy="7" r="3.6" fill="#e8f4fb"/><path d="M7 7 V3.4 A3.6 3.6 0 0 1 10.6 7 Z" fill="#f0a030"/><path d="M13 4 H19 M13 7 H19 M13 10 H19" stroke="#e8f4fb" stroke-width="1.4"/><rect x="3" y="12" width="8" height="1.4" fill="#f0c040"/></svg>
<svg style="left:749px;top:737px;" width="24" height="24" viewBox="0 0 24 24"><rect x="5" y="1" width="17" height="14" rx="1" fill="#d8dde4"/><rect x="6.5" y="2.5" width="14" height="11" fill="#2f6fd0"/><rect x="1" y="5" width="15" height="7" rx="1" fill="#5b8fe0" stroke="#e6ecf5" stroke-width="1"/><path d="M3 7.5 H14 M3 9.5 H14" stroke="#e6ecf5" stroke-width="1" stroke-dasharray="1.5 1"/><path d="M11 15 H16 L17 20 H10 Z" fill="#c6cbd2"/><ellipse cx="13.5" cy="21" rx="6" ry="2" fill="#dde1e6"/></svg>
<svg style="left:797px;top:736px;" width="25" height="25" viewBox="0 0 25 25"><rect x="0" y="0" width="25" height="25" fill="#0c2461"/><path d="M17.3 4.5 L21 6.1 V18.9 L17.3 20.5 L10.2 13.9 L6.3 16.9 L4.5 16 V9 L6.3 8.1 L10.2 11.1 Z M17 9.4 L13 12.5 L17 15.6 Z M6.4 10.6 V14.4 L8.4 12.5 Z" fill="#fff" fill-rule="evenodd"/></svg>
<svg style="left:846px;top:737px;" width="24" height="24" viewBox="0 0 24 24"><path d="M1 15 L14 9 L23 13 L10 21 Z" fill="#5c86d6"/><path d="M1 15 L14 9 L23 13 L10 21 Z" fill="none" stroke="#9fbcf0" stroke-width="0.8"/><circle cx="7" cy="10.5" r="4" fill="#e02a2a"/><path d="M12 1 L15 8 V15 H9 V8 Z" fill="#38a838"/><rect x="16" y="4" width="4.5" height="12" rx="1.5" fill="#f2c020"/></svg>
<svg style="left:895px;top:737px;" width="24" height="24" viewBox="0 0 24 24"><path d="M2 1 H22 V19 L18 23 H2 Z" fill="#f2f6fb"/><path d="M2 1 H22 V9 H2 Z" fill="#dfe9f6"/><path d="M18 23 V19 H22 Z" fill="#b5c8e2"/><path d="M4 16 H16 M4 18.5 H16 M4 21 H14" stroke="#9fb6d8" stroke-width="1"/></svg>
<span class="t" style="left:897px;top:736.22px;font:bold 19px/23px 'Liberation Sans', sans-serif;color:#1f5fbf;">W</span>
<div style="left:933px;top:728px;width:48px;height:40px;background:#3a3c3a;"></div>
<svg style="left:946px;top:738px;" width="22" height="21" viewBox="0 0 22 21"><rect x="0.5" y="0.5" width="21" height="20" fill="#d9d9d9"/><rect x="1.5" y="1.5" width="4" height="4" fill="#4a4a4a"/><rect x="1.5" y="15.5" width="4" height="4" fill="#4a4a4a"/><rect x="7" y="1" width="14" height="11" fill="#f0b21c"/><rect x="8" y="2" width="12" height="9" fill="#f7c83a"/><rect x="2" y="6.5" width="5" height="8" fill="#d93a2b"/><rect x="7.5" y="13" width="13" height="7" fill="#4d86e0"/><rect x="8.5" y="14" width="11" height="3" fill="#7fb0f0"/></svg>
<div style="left:790px;top:766px;width:40px;height:2px;background:#76b9ed;"></div>
<div style="left:887px;top:766px;width:40px;height:2px;background:#76b9ed;"></div>
<div style="left:933px;top:766px;width:48px;height:2px;background:#76b9ed;"></div>
<div style="left:926px;top:766px;width:5px;height:2px;background:#4f7ea6;"></div>
<svg style="left:1095px;top:743px;" width="13" height="8" viewBox="0 0 13 8"><path d="M1 7 L6.5 1.5 L12 7" fill="none" stroke="#fff" stroke-width="1.3"/></svg>
<svg style="left:1116px;top:741px;" width="18" height="13" viewBox="0 0 18 13"><rect x="5" y="3.6" width="11" height="7.6" fill="none" stroke="#fff" stroke-width="1.1"/><rect x="16.4" y="5.8" width="1.2" height="3.2" fill="#fff"/><rect x="6.6" y="5.2" width="7.8" height="4.4" fill="#fff"/><path d="M2 0.8 V3 M4.4 0.8 V3" stroke="#fff" stroke-width="1.1"/><path d="M1 3 H5.4 V5.4 C5.4 7.2 1 7.2 1 5.4 Z" fill="#fff"/><path d="M3.2 6.5 V11 H5" fill="none" stroke="#fff" stroke-width="1.1"/></svg>
<svg style="left:1143px;top:741px;" width="15" height="14" viewBox="0 0 15 14"><path d="M1.5 13 C1.5 6 7 1.5 13.5 1.5" fill="none" stroke="#bbb" stroke-width="1.1"/><path d="M4.5 13 C4.5 8 8.5 4.5 13.5 4.5" fill="none" stroke="#fff" stroke-width="1.1"/><path d="M7.5 13 C7.5 10 10 7.5 13.5 7.5" fill="none" stroke="#fff" stroke-width="1.1"/><circle cx="11.8" cy="11.8" r="1.7" fill="#fff"/></svg>
<svg style="left:1164px;top:741px;" width="18" height="14" viewBox="0 0 18 14"><path d="M1 5 H3.5 L7 1.5 V12.5 L3.5 9 H1 Z" fill="none" stroke="#fff" stroke-width="1.1"/><path d="M9 5 C10 6 10 8 9 9 M11 3.5 C13 5.5 13 8.5 11 10.5" fill="none" stroke="#fff" stroke-width="1"/><path d="M13.2 2 C16 5 16 9 13.2 12" fill="none" stroke="#888" stroke-width="1"/></svg>
<svg style="left:1192px;top:739px;" width="18" height="18" viewBox="0 0 18 18"><path d="M9.2 3.6 L12.4 1.2 C13.6 0.4 15 2 14 3.2 L7 12.6 L4.6 13.6 L5 11 Z" fill="none" stroke="#fff" stroke-width="1.2"/><path d="M6.6 9.6 C3 8.6 0.8 11.4 1.6 13.6 C2.4 15.6 5 15 5.4 13.2" fill="none" stroke="#fff" stroke-width="1.2"/><path d="M12.8 6.4 C15.2 6 16.6 7.8 15.6 9.2" fill="none" stroke="#fff" stroke-width="1.2"/></svg>
<svg style="left:1221px;top:741px;" width="23" height="14" viewBox="0 0 23 14"><rect x="0.6" y="0.6" width="21.8" height="12.8" rx="1" fill="none" stroke="#fff" stroke-width="1.2"/><path d="M3 4 H20 M3 6.5 H20 M3 9 H20" stroke="#fff" stroke-width="1.2" stroke-dasharray="1.3 1"/><path d="M6 11.3 H17" stroke="#fff" stroke-width="1.2"/></svg>
<span class="t" style="left:1257.5px;top:732.14px;font:12px/14px 'Liberation Sans', sans-serif;color:#fff;transform:scaleX(0.9246);transform-origin:0 50%;">12:45 PM</span>
<span class="t" style="left:1255.2px;top:750.14px;font:12px/14px 'Liberation Sans', sans-serif;color:#fff;transform:scaleX(0.9683);transform-origin:0 50%;">6/10/2019</span>
<svg style="left:1324px;top:740px;" width="17" height="17" viewBox="0 0 17 17"><path d="M1 1 H16 V11.5 H10.5 L8.5 14 L6.5 11.5 H1 Z" fill="none" stroke="#fff" stroke-width="1.2"/></svg>
<div style="left:1362px;top:728px;width:1px;height:40px;background:#6a6a6a;"></div>
<div style="left:208px;top:14px;width:564px;height:685px;background:#fff;border:1px solid #1a85d8;box-shadow:0 3px 16px 1px rgba(0,0,0,0.32);"></div>
<svg style="left:218px;top:22px;" width="14" height="14" viewBox="0 0 14 14"><rect x="0.3" y="0.3" width="13.4" height="13.4" fill="#dadada" stroke="#c4c4c4" stroke-width="0.6"/><rect x="1" y="1" width="3.8" height="3.4" fill="#fff"/><rect x="1" y="10.4" width="3.8" height="2.8" fill="#fff"/><rect x="10.8" y="10.4" width="2.4" height="2.8" fill="#fff"/><rect x="5.9" y="0.9" width="6.8" height="6.8" fill="#f2bd22" stroke="#c2930c" stroke-width="0.7"/><rect x="7.2" y="2.2" width="4.2" height="4.2" fill="#fbe16e"/><rect x="1.3" y="5" width="3.6" height="5" fill="#c2291d" stroke="#8c1a12" stroke-width="0.6"/><rect x="2.2" y="6" width="1.2" height="2" fill="#ea8379"/><rect x="5.9" y="8.9" width="5.8" height="3.8" fill="#3f7ee0"/><rect x="6.9" y="9.8" width="3.6" height="1.7" fill="#90baf7"/></svg>
<span class="t" style="left:238px;top:23.14px;font:12px/14px 'Liberation Sans', sans-serif;color:#000;transform:scaleX(0.9683);transform-origin:0 50%;">Tugas Form Pajak</span>
<div style="left:652px;top:29px;width:10px;height:1px;background:#000;"></div>
<div style="left:697px;top:24px;width:10px;height:10px;border:1px solid #000;"></div>
<svg style="left:743px;top:24px;" width="10" height="10" viewBox="0 0 10 10"><path d="M0.3 0.3 L9.7 9.7 M9.7 0.3 L0.3 9.7" stroke="#000" stroke-width="1"/></svg>
<svg style="left:250px;top:58px;" width="96" height="80" viewBox="0 0 96 80">
<defs>

<linearGradient id="gold" x1="0" x2="1" y1="0" y2="0"><stop offset="0" stop-color="#f2c21c"/><stop offset="0.35" stop-color="#d9a010"/><stop offset="0.62" stop-color="#6b3f02"/><stop offset="1" stop-color="#c48a0a"/></linearGradient>
</defs>
<path d="M23.1 73 L8 32.7 L48.4 7.9 L88.7 33 L74.2 73" fill="none" stroke="#fff" stroke-width="3.6" stroke-linejoin="miter"/><path d="M23.1 73 L8 32.7 L48.4 7.9 L88.7 33 L74.2 73" fill="none" stroke="#1c1c1c" stroke-width="3.6" stroke-dasharray="1.25 1.35" stroke-linejoin="miter"/>
<path d="M48.4 10.2 L86.6 33.4 L72.9 71.9 H24.5 L10.3 33.1 Z" fill="#2c1a83"/>
<g>
<path d="M30.7 24.3 C27 28 21.5 35 17 44.8 C17.6 47.5 19 50.5 21 52.6 C23 56 26.5 58.4 30.5 59.8 C34 61.2 40 61.2 45.5 59.8 C43 53 38.5 44 35.8 36 C34.2 31 32.4 27 30.7 24.3 Z" fill="#f0b607"/>
<g stroke="#2c1a83" stroke-width="0.55" fill="none">
<path d="M27.3 28.6 L41.5 55.5 M24.2 32.8 L40 56.5 M21.4 37.3 L38.5 57.3 M19.2 41.6 L37 58 M17.8 46.5 L35.5 58.6 M19.8 51 L34 59.2 M23.2 55.2 L33 59.6"/>
</g>
<path d="M31 52 C33 50.5 36 51 36.6 53.2 C37 55 35.2 56.2 33.8 55.4 M37.5 56.5 C39.5 55 42.2 56.2 42 58.2" stroke="#b47d05" stroke-width="0.6" fill="none"/>
</g>
<g transform="translate(96.8,0) scale(-1,1)">
<path d="M30.7 24.3 C27 28 21.5 35 17 44.8 C17.6 47.5 19 50.5 21 52.6 C23 56 26.5 58.4 30.5 59.8 C34 61.2 40 61.2 45.5 59.8 C43 53 38.5 44 35.8 36 C34.2 31 32.4 27 30.7 24.3 Z" fill="#f0b607"/>
<g stroke="#2c1a83" stroke-width="0.55" fill="none">
<path d="M27.3 28.6 L41.5 55.5 M24.2 32.8 L40 56.5 M21.4 37.3 L38.5 57.3 M19.2 41.6 L37 58 M17.8 46.5 L35.5 58.6 M19.8 51 L34 59.2 M23.2 55.2 L33 59.6"/>
</g>
<path d="M31 52 C33 50.5 36 51 36.6 53.2 C37 55 35.2 56.2 33.8 55.4 M37.5 56.5 C39.5 55 42.2 56.2 42 58.2" stroke="#b47d05" stroke-width="0.6" fill="none"/>
</g>
<path d="M43.5 60.5 C45 57.5 46.8 57 48.4 60.5 C50 57 51.8 57.5 53.3 60.5 Z" fill="#f0b607"/>
<path d="M36.2 22.6 L38.2 21.8 L46.3 50.2 L43.4 51.2 Z" fill="#2c1a83"/>
<path d="M36.8 23 L44 50" stroke="#f2c21c" stroke-width="2.1" stroke-dasharray="1.7 1.1" fill="none"/>
<path d="M39.4 24.5 L45.6 49" stroke="#f2c21c" stroke-width="1.9" stroke-dasharray="1.7 1.1" stroke-dashoffset="1.2" fill="none"/>
<path d="M47.3 20.8 H49.5 V23 H52.4 C53 23 53.3 23.4 53.3 24 V29 C53.3 30.3 52.2 30.6 51.5 31.6 C51 32.5 51.1 34 51.3 36 C51.8 42 51.3 50 48.6 57.8 C48.5 58.1 48.3 58.1 48.2 57.8 C45.8 50 45.3 42 45.6 36 C45.8 34 45.9 32.5 45.4 31.6 C44.8 30.6 43.6 30.3 43.6 29 V24 C43.6 23.4 43.9 23 44.5 23 H47.3 Z" fill="url(#gold)"/>
<path d="M44 26.2 H53 M44 27.6 H53" stroke="#6b3f02" stroke-width="0.5"/>
<path d="M57.6 24.5 L61.8 25 L57.2 50.5 L52.8 51.5 Z" fill="#149a4d"/>
<path d="M59.6 26 L55 50" stroke="#0b6e36" stroke-width="2.4" stroke-dasharray="0.7 1.7" fill="none"/>
<path d="M59.6 19.8 l0.95 2.1 2.3 0.25 -1.7 1.55 0.5 2.25 -2.05 -1.15 -2.05 1.15 0.5 -2.25 -1.7 -1.55 2.3 -0.25 Z" fill="#fff"/>
<path d="M29.6 62.8 C31 60.6 34 61.2 36 61.6 C44 60.2 53 60.2 61 61.6 C63 61.2 66 60.6 67.4 62.8 C66.5 65 64.5 66.3 62 65.8 C53.5 64.2 43.5 64.2 35 65.8 C32.5 66.3 30.5 65 29.6 62.8 Z" fill="#fbfbf7"/>
<path d="M34 63.6 C43 62 54 62 63 63.6" stroke="#8a8a92" stroke-width="0.9" stroke-dasharray="0.8 0.7" fill="none"/>
</svg>
<span class="t" style="left:356.7px;top:75.99px;font:bold 11px/13px 'Liberation Sans', sans-serif;color:#000;transform:scaleX(1.0681);transform-origin:0 50%;">Direktorat Jendral Pajak Kementrian Negara Republik Indonesia</span>
<span class="t" style="left:425.4px;top:88.99px;font:bold 11px/13px 'Liberation Sans', sans-serif;color:#000;transform:scaleX(1.0538);transform-origin:0 50%;">Form Formulir Pajak Penghasilan (PPH)</span>
<div style="left:237px;top:145px;width:503px;height:132px;border:1px solid #dcdcdc;"></div>
<div style="left:244px;top:140px;width:277px;height:10px;background:#fff;"></div>
<span class="t" style="left:247.1px;top:139.99px;font:bold 11px/13px 'Liberation Sans', sans-serif;color:#000;transform:scaleX(1.0807);transform-origin:0 50%;">Bagian A. Identitas Pemungut Pajak Wajib Pajak</span>
<span class="t" style="left:263.4px;top:172.14px;font:12px/14px 'Liberation Sans', sans-serif;color:#000;transform:scaleX(0.8778);transform-origin:0 50%;">NPWP</span>
<span class="t" style="left:263.4px;top:207.14px;font:12px/14px 'Liberation Sans', sans-serif;color:#000;transform:scaleX(0.8215);transform-origin:0 50%;">Nama</span>
<span class="t" style="left:263.4px;top:239.14px;font:12px/14px 'Liberation Sans', sans-serif;color:#000;transform:scaleX(0.8217);transform-origin:0 50%;">Alamat</span>
<div style="left:356px;top:169px;width:168px;height:18px;background:#fff;border:1px solid #7a7a7a;"></div>
<span class="t" style="left:359.8px;top:172.09px;font:bold 10.7px/13px 'Liberation Sans', sans-serif;color:#000;letter-spacing:-0.147px;">21312</span>
<div style="left:356px;top:204px;width:168px;height:18px;background:#fff;border:1px solid #7a7a7a;"></div>
<span class="t" style="left:359.8px;top:207.09px;font:bold 10.7px/13px 'Liberation Sans', sans-serif;color:#000;letter-spacing:-0.037px;">M. Pandu</span>
<div style="left:356px;top:236px;width:168px;height:18px;background:#fff;border:1px solid #7a7a7a;"></div>
<span class="t" style="left:359.8px;top:239.09px;font:bold 10.7px/13px 'Liberation Sans', sans-serif;color:#000;transform:scaleX(0.9650);transform-origin:0 50%;">Jember</span>
<div style="left:237px;top:289px;width:503px;height:270px;border:1px solid #dcdcdc;"></div>
<div style="left:244px;top:284px;width:115px;height:10px;background:#fff;"></div>
<span class="t" style="left:245.5px;top:284.84px;font:bold 10px/12px 'Liberation Sans', sans-serif;color:#000;transform:scaleX(1.0548);transform-origin:0 50%;">Bagian B. Objek Pajak</span>
<span class="t" style="left:262.8px;top:327.14px;font:12px/14px 'Liberation Sans', sans-serif;color:#000;transform:scaleX(0.8600);transform-origin:0 50%;">Gaji Sebulan</span>
<span class="t" style="left:262.8px;top:358.14px;font:12px/14px 'Liberation Sans', sans-serif;color:#000;transform:scaleX(0.8759);transform-origin:0 50%;">Asuransi Jaminan Kecelakaan</span>
<span class="t" style="left:262.8px;top:390.14px;font:12px/14px 'Liberation Sans', sans-serif;color:#000;transform:scaleX(0.8558);transform-origin:0 50%;">Asuransi Kematian</span>
<span class="t" style="left:262.8px;top:422.14px;font:12px/14px 'Liberation Sans', sans-serif;color:#000;transform:scaleX(0.8620);transform-origin:0 50%;">Asuransi Pensiun</span>
<div style="left:437px;top:325px;width:168px;height:18px;background:#fff;border:1px solid #7a7a7a;"></div>
<span class="t" style="left:440.8px;top:328.09px;font:bold 10.7px/13px 'Liberation Sans', sans-serif;color:#000;letter-spacing:0.070px;">5000000</span>
<div style="left:437px;top:356px;width:168px;height:18px;background:#fff;border:1px solid #7a7a7a;"></div>
<span class="t" style="left:440.8px;top:359.09px;font:bold 10.7px/13px 'Liberation Sans', sans-serif;color:#000;letter-spacing:0.070px;">1000000</span>
<div style="left:437px;top:388px;width:168px;height:18px;background:#fff;border:1px solid #7a7a7a;"></div>
<span class="t" style="left:440.8px;top:391.09px;font:bold 10.7px/13px 'Liberation Sans', sans-serif;color:#000;letter-spacing:0.070px;">5000000</span>
<div style="left:437px;top:420px;width:168px;height:18px;background:#fff;border:1px solid #0078d7;"></div>
<span class="t" style="left:440.8px;top:423.09px;font:bold 10.7px/13px 'Liberation Sans', sans-serif;color:#000;letter-spacing:0.070px;">3000000</span>
<div style="left:483px;top:424px;width:1px;height:11px;background:#000;"></div>
<div style="left:500px;top:458px;width:104px;height:21px;background:#e1e1e1;border:1px solid #adadad;"></div>
<div style="left:500px;top:490px;width:104px;height:20px;background:#e1e1e1;border:1px solid #adadad;"></div>
<div style="left:500px;top:520px;width:104px;height:21px;background:#e1e1e1;border:1px solid #adadad;"></div>
<div style="left:500px;top:575px;width:104px;height:21px;background:#e1e1e1;border:1px solid #adadad;"></div>
<div style="left:500px;top:619px;width:104px;height:21px;background:#e1e1e1;border:1px solid #adadad;"></div>
<span class="t" style="left:355.5px;top:461.14px;font:12px/14px 'Liberation Sans', sans-serif;color:#000;transform:scaleX(0.8535);transform-origin:0 50%;">Jumlah Gaji Bruto</span>
<span class="t" style="left:355.5px;top:493.14px;font:12px/14px 'Liberation Sans', sans-serif;color:#000;transform:scaleX(0.8751);transform-origin:0 50%;">Pajak Penghasilan 5%</span>
<span class="t" style="left:355.5px;top:524.83px;font:bold 10px/12px 'Liberation Sans', sans-serif;color:#000;transform:scaleX(1.0418);transform-origin:0 50%;">Total yang di Bayarkan</span>
<span class="t" style="left:482px;top:524.83px;font:bold 10px/12px 'Liberation Sans', sans-serif;color:#000;letter-spacing:0.078px;">Rp</span>
<div style="left:611px;top:459px;width:100px;height:18px;background:#fff;border:1px solid #7a7a7a;"></div>
<span class="t" style="left:615.3px;top:462.09px;font:bold 10.7px/13px 'Liberation Sans', sans-serif;color:#000;letter-spacing:-0.108px;">14000000</span>
<div style="left:611px;top:491px;width:100px;height:18px;background:#fff;border:1px solid #7a7a7a;"></div>
<span class="t" style="left:615.3px;top:494.09px;font:bold 10.7px/13px 'Liberation Sans', sans-serif;color:#000;letter-spacing:-0.112px;">700000</span>
<div style="left:611px;top:521px;width:100px;height:18px;background:#fff;border:1px solid #7a7a7a;"></div>
<span class="t" style="left:615.3px;top:524.09px;font:bold 10.7px/13px 'Liberation Sans', sans-serif;color:#000;letter-spacing:-0.108px;">14700000</span>
<span class="t" style="left:262.8px;top:579.14px;font:12px/14px 'Liberation Sans', sans-serif;color:#000;transform:scaleX(0.8816);transform-origin:0 50%;">Pajak Penghasilan 1 Bulan (PPH)</span>
<span class="t" style="left:262.8px;top:623.14px;font:12px/14px 'Liberation Sans', sans-serif;color:#000;transform:scaleX(0.8823);transform-origin:0 50%;">Jumlah PPH Selama 1 Tahun (12 Bulan)</span>
<div style="left:611px;top:577px;width:100px;height:20px;background:#fff;border:1px solid #7a7a7a;"></div>
<span class="t" style="left:614.6px;top:580.14px;font:12px/14px 'Liberation Sans', sans-serif;color:#000;transform:scaleX(0.8790);transform-origin:0 50%;">700000</span>
<div style="left:611px;top:620px;width:100px;height:20px;background:#fff;border:1px solid #7a7a7a;"></div>
<span class="t" style="left:614.5px;top:623.14px;font:12px/14px 'Liberation Sans', sans-serif;color:#000;transform:scaleX(0.8862);transform-origin:0 50%;">8400000</span>
</body></html>
